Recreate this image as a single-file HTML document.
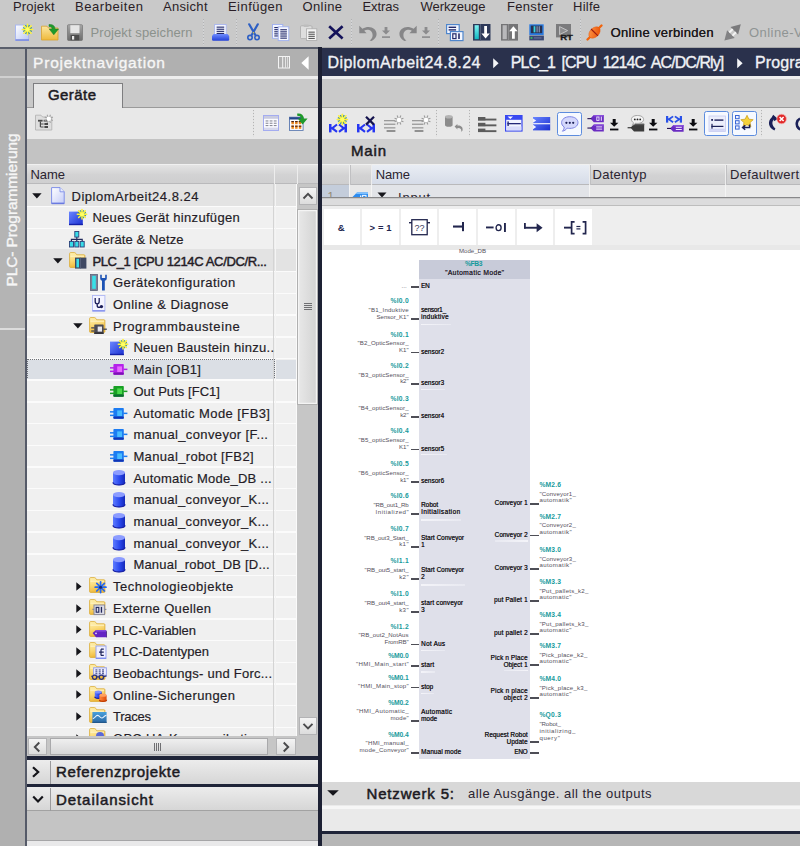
<!DOCTYPE html>
<html>
<head>
<meta charset="utf-8">
<title>TIA Portal</title>
<style>
*{box-sizing:border-box;margin:0;padding:0}
html,body{width:800px;height:846px;overflow:hidden;background:#c9c9c9;font-family:"Liberation Sans",sans-serif;font-size:13px;color:#241c26}
#root{position:relative;width:800px;height:846px;overflow:hidden;background:#c9c9c9}
#root div,#root span,#root svg{position:absolute}
.t{white-space:nowrap;display:block}
svg{overflow:visible}
</style>
</head>
<body>
<div id="root">
<span class="t" style="top:0.40px;font-size:13px;line-height:13px;color:#2a1d26;left:13.00px;letter-spacing:0.172px;">Projekt</span>
<span class="t" style="top:0.40px;font-size:13px;line-height:13px;color:#2a1d26;left:75.00px;letter-spacing:0.568px;">Bearbeiten</span>
<span class="t" style="top:0.40px;font-size:13px;line-height:13px;color:#2a1d26;left:163.00px;letter-spacing:0.310px;">Ansicht</span>
<span class="t" style="top:0.40px;font-size:13px;line-height:13px;color:#2a1d26;left:228.00px;letter-spacing:0.453px;">Einf&uuml;gen</span>
<span class="t" style="top:0.40px;font-size:13px;line-height:13px;color:#2a1d26;left:302.50px;letter-spacing:0.384px;">Online</span>
<span class="t" style="top:0.40px;font-size:13px;line-height:13px;color:#2a1d26;left:362.50px;letter-spacing:-0.069px;">Extras</span>
<span class="t" style="top:0.40px;font-size:13px;line-height:13px;color:#2a1d26;left:420.50px;letter-spacing:-0.064px;">Werkzeuge</span>
<span class="t" style="top:0.40px;font-size:13px;line-height:13px;color:#2a1d26;left:507.00px;letter-spacing:0.320px;">Fenster</span>
<span class="t" style="top:0.40px;font-size:13px;line-height:13px;color:#2a1d26;left:573.00px;letter-spacing:0.246px;">Hilfe</span>
<svg width="0" height="0" style="left:0;top:0"><defs>
<linearGradient id="gPage" x1="0" y1="0" x2="1" y2="1"><stop offset="0" stop-color="#ffffff"/><stop offset="1" stop-color="#b9c6f5"/></linearGradient>
<linearGradient id="gFold" x1="0" y1="0" x2="0" y2="1"><stop offset="0" stop-color="#fbe6a0"/><stop offset="1" stop-color="#efb93a"/></linearGradient>
<linearGradient id="gBlue" x1="0" y1="0" x2="0" y2="1"><stop offset="0" stop-color="#6f8cff"/><stop offset="1" stop-color="#2340d8"/></linearGradient>
<linearGradient id="gBlueSq" x1="0" y1="0" x2="1" y2="1"><stop offset="0" stop-color="#6a86ff"/><stop offset="1" stop-color="#1a2fd0"/></linearGradient>
<linearGradient id="gCyl" x1="0" y1="0" x2="1" y2="0"><stop offset="0" stop-color="#5d7bff"/><stop offset="0.55" stop-color="#2a48ee"/><stop offset="1" stop-color="#1428b8"/></linearGradient>
<linearGradient id="gTeal" x1="0" y1="0" x2="0" y2="1"><stop offset="0" stop-color="#7ff4f4"/><stop offset="1" stop-color="#10b8c0"/></linearGradient>
<linearGradient id="gGray" x1="0" y1="0" x2="0" y2="1"><stop offset="0" stop-color="#a6a6a6"/><stop offset="1" stop-color="#6c6c6c"/></linearGradient>
<linearGradient id="gOr" x1="0" y1="0" x2="1" y2="1"><stop offset="0" stop-color="#ff9a4a"/><stop offset="1" stop-color="#e84a00"/></linearGradient>
</defs></svg>
<svg style="left:15px;top:23.5px" width="19" height="18" viewBox="0 0 19 18" ><rect x="0.5" y="1" width="13" height="15.5" fill="url(#gPage)" stroke="#aab8f0" stroke-width="1"/><rect x="0.5" y="15.2" width="13.5" height="1.6" fill="#7a8ae0"/><line x1="13.61" y1="5.96" x2="16.92" y2="7.33" stroke="#2e8a8a" stroke-width="1.5" opacity="0.85"/><line x1="12.96" y1="6.61" x2="14.33" y2="9.92" stroke="#2e8a8a" stroke-width="1.5" opacity="0.85"/><line x1="12.04" y1="6.61" x2="10.67" y2="9.92" stroke="#2e8a8a" stroke-width="1.5" opacity="0.85"/><line x1="11.39" y1="5.96" x2="8.08" y2="7.33" stroke="#2e8a8a" stroke-width="1.5" opacity="0.85"/><line x1="11.39" y1="5.04" x2="8.08" y2="3.67" stroke="#2e8a8a" stroke-width="1.5" opacity="0.85"/><line x1="12.04" y1="4.39" x2="10.67" y2="1.08" stroke="#2e8a8a" stroke-width="1.5" opacity="0.85"/><line x1="12.96" y1="4.39" x2="14.33" y2="1.08" stroke="#2e8a8a" stroke-width="1.5" opacity="0.85"/><line x1="13.61" y1="5.04" x2="16.92" y2="3.67" stroke="#2e8a8a" stroke-width="1.5" opacity="0.85"/><line x1="12.50" y1="5.50" x2="17.70" y2="5.50" stroke="#fff23a" stroke-width="1.5" stroke-linecap="round"/><line x1="12.50" y1="5.50" x2="16.18" y2="9.18" stroke="#fff23a" stroke-width="1.5" stroke-linecap="round"/><line x1="12.50" y1="5.50" x2="12.50" y2="10.70" stroke="#fff23a" stroke-width="1.5" stroke-linecap="round"/><line x1="12.50" y1="5.50" x2="8.82" y2="9.18" stroke="#fff23a" stroke-width="1.5" stroke-linecap="round"/><line x1="12.50" y1="5.50" x2="7.30" y2="5.50" stroke="#fff23a" stroke-width="1.5" stroke-linecap="round"/><line x1="12.50" y1="5.50" x2="8.82" y2="1.82" stroke="#fff23a" stroke-width="1.5" stroke-linecap="round"/><line x1="12.50" y1="5.50" x2="12.50" y2="0.30" stroke="#fff23a" stroke-width="1.5" stroke-linecap="round"/><line x1="12.50" y1="5.50" x2="16.18" y2="1.82" stroke="#fff23a" stroke-width="1.5" stroke-linecap="round"/><circle cx="12.50" cy="5.50" r="2.18" fill="#ffff66"/></svg>
<svg style="left:41px;top:23.5px" width="19" height="18" viewBox="0 0 19 18" ><path d="M0.5 2.2 H6 L7.5 4 H17 V16 H0.5Z" fill="url(#gFold)" stroke="#d9a22e" stroke-width="0.8"/><path d="M8 0.5 C12 0.3 14 2 14 5 H17.5 L12.8 10.8 L8.2 5 H11 C11 3.2 10 2.6 8 2.5Z" fill="#1f9a2a" stroke="#157a1e" stroke-width="0.5"/></svg>
<svg style="left:67px;top:23.5px" width="16" height="17.5" viewBox="0 0 16 17.5" ><rect x="0.5" y="0.7" width="15" height="15.8" rx="1" fill="url(#gGray)" stroke="#6a6a6a" stroke-width="0.6"/><rect x="3.3" y="1.2" width="9.2" height="8" fill="#e6e6e6"/><rect x="3.6" y="11" width="8.6" height="5.3" fill="#4c4c4c"/><rect x="5" y="12" width="2.2" height="3.6" fill="#e8e8e8"/></svg>
<div style="left:202.5px;top:19px;width:1px;height:26px;background:repeating-linear-gradient(#b0b1b3 0 1px,#d4d5d7 1px 3px)"></div>
<svg style="left:211.8px;top:23.7px" width="18" height="17" viewBox="0 0 18 17" ><rect x="2.6" y="0.5" width="11.6" height="10.5" fill="#f4f6ff" stroke="#a9b6ee" stroke-width="0.9"/><rect x="4.6" y="2.6" width="7.6" height="1.1" fill="#232a6a"/><rect x="4.6" y="4.7" width="7.6" height="1.1" fill="#232a6a"/><rect x="4.6" y="6.8" width="7.6" height="1.1" fill="#232a6a"/><rect x="4.6" y="8.9" width="7.6" height="1.1" fill="#232a6a"/><path d="M1.5 10 H15.7 L17.2 12 V15.4 Q17.2 16.7 15.9 16.7 H1.3 Q0 16.7 0 15.4 V12Z" fill="url(#gBlue)"/></svg>
<div style="left:236px;top:19px;width:1px;height:26px;background:repeating-linear-gradient(#b0b1b3 0 1px,#d4d5d7 1px 3px)"></div>
<svg style="left:247px;top:23.7px" width="13" height="17" viewBox="0 0 13 17" ><path d="M2.2 0.3 L8.2 10.8 M10.8 0.3 L4.8 10.8" stroke="#2d5fc4" stroke-width="2.2" stroke-linecap="round" fill="none"/><circle cx="3" cy="13.6" r="2.2" fill="none" stroke="#2d5fc4" stroke-width="1.6"/><circle cx="10" cy="13.6" r="2.2" fill="none" stroke="#2d5fc4" stroke-width="1.6"/><circle cx="6.5" cy="8.8" r="0.8" fill="#e8d040"/></svg>
<svg style="left:272.2px;top:23.7px" width="17.5" height="17" viewBox="0 0 17.5 17" ><rect x="0.5" y="0.5" width="10.3" height="13.8" fill="#f4f6ff" stroke="#9fb0f0" stroke-width="0.9"/><rect x="2.3" y="3" width="6.5" height="1.1" fill="#232a6a"/><rect x="2.3" y="5.1" width="6.5" height="1.1" fill="#232a6a"/><rect x="2.3" y="7.2" width="6.5" height="1.1" fill="#232a6a"/><rect x="2.3" y="9.3" width="6.5" height="1.1" fill="#232a6a"/><rect x="2.3" y="11.4" width="6.5" height="1.1" fill="#232a6a"/><rect x="6.2" y="2.8" width="10.6" height="13.8" fill="#f7f8ff" stroke="#9fb0f0" stroke-width="0.9"/><rect x="8.3" y="5.2" width="6.6" height="1.1" fill="#232a6a"/><rect x="8.3" y="7.3" width="6.6" height="1.1" fill="#232a6a"/><rect x="8.3" y="9.4" width="6.6" height="1.1" fill="#232a6a"/><rect x="8.3" y="11.5" width="6.6" height="1.1" fill="#232a6a"/><rect x="8.3" y="13.6" width="6.6" height="1.1" fill="#232a6a"/></svg>
<svg style="left:300px;top:23.7px" width="17.5" height="17" viewBox="0 0 17.5 17" ><rect x="0.5" y="1.8" width="11.5" height="12.8" rx="1" fill="#dedede" stroke="#a9a9a9" stroke-width="0.8"/><rect x="3.6" y="0.4" width="5.2" height="2.6" rx="0.8" fill="#bdbdbd"/><rect x="6.4" y="4.8" width="10.4" height="11.6" fill="#f3f3f3" stroke="#ababab" stroke-width="0.8"/><rect x="8.4" y="7.6" width="6.4" height="1.1" fill="#5b5b5b"/><rect x="8.4" y="9.7" width="6.4" height="1.1" fill="#5b5b5b"/><rect x="8.4" y="11.8" width="6.4" height="1.1" fill="#5b5b5b"/><rect x="8.4" y="13.9" width="6.4" height="1.1" fill="#5b5b5b"/></svg>
<svg style="left:328px;top:25.2px" width="16" height="15" viewBox="0 0 16 15" ><path d="M1.2 1.2 L14.6 13.4 M14.6 1.2 L1.2 13.4" stroke="#14125a" stroke-width="2.7" fill="none"/></svg>
<div style="left:351px;top:19px;width:1px;height:26px;background:repeating-linear-gradient(#b0b1b3 0 1px,#d4d5d7 1px 3px)"></div>
<svg style="left:359px;top:24.5px" width="18" height="16.5" viewBox="0 0 18 16.5" ><path d="M0.3 0.8 L0.3 8.2 L7.6 8.2 L5.2 5.7 C8.6 3.6 13.6 5.2 13.6 10.2 C13.6 12.6 12.4 14.2 10.6 15.6 L12.6 16 C16 14 17.6 11.8 17.6 9 C17.6 3.4 10.4 -0.2 3.4 3.8Z" fill="#868688"/></svg>
<svg style="left:382px;top:27.2px" width="8" height="11.5" viewBox="0 0 8 11.5" ><path d="M2.6 0 H5.4 V3.6 H8 L4 7.6 L0 3.6 H2.6Z" fill="#8b8b8d"/><rect x="0" y="9.3" width="8" height="1.6" fill="#8b8b8d"/></svg>
<svg style="left:399px;top:24.5px" width="18" height="16.5" viewBox="0 0 18 16.5" ><path d="M17.7 0.8 L17.7 8.2 L10.4 8.2 L12.8 5.7 C9.4 3.6 4.4 5.2 4.4 10.2 C4.4 12.6 5.6 14.2 7.4 15.6 L5.4 16 C2 14 0.4 11.8 0.4 9 C0.4 3.4 7.6 -0.2 14.6 3.8Z" fill="#868688"/></svg>
<svg style="left:422px;top:27.2px" width="8" height="11.5" viewBox="0 0 8 11.5" ><path d="M2.6 0 H5.4 V3.6 H8 L4 7.6 L0 3.6 H2.6Z" fill="#8b8b8d"/><rect x="0" y="9.3" width="8" height="1.6" fill="#8b8b8d"/></svg>
<div style="left:437.5px;top:19px;width:1px;height:26px;background:repeating-linear-gradient(#b0b1b3 0 1px,#d4d5d7 1px 3px)"></div>
<svg style="left:446px;top:23.7px" width="18" height="17.2" viewBox="0 0 18 17.2" ><rect x="0.6" y="0.6" width="12.6" height="9" fill="#f4f7ff" stroke="#4f86cc" stroke-width="1.2"/><rect x="2.6" y="2.6" width="7.5" height="1.4" fill="#232a6a"/><rect x="2.6" y="5.2" width="7.5" height="1.4" fill="#232a6a"/><rect x="4.4" y="7.6" width="12.6" height="9" fill="#f4f7ff" stroke="#4f86cc" stroke-width="1.2"/><rect x="6.8" y="9.8" width="3.2" height="4.8" fill="none" stroke="#232a6a" stroke-width="1.2"/><rect x="12.2" y="9.4" width="1.6" height="5.6" fill="#232a6a"/></svg>
<svg style="left:473px;top:23.8px" width="17.5" height="16.6" viewBox="0 0 17.5 16.6" ><rect x="0" y="0" width="17.5" height="16.6" fill="#2e3a5a"/><rect x="1.6" y="1.2" width="4.2" height="14" fill="url(#gTeal)"/><rect x="7" y="0" width="0.9" height="16.6" fill="#55607c"/><path d="M11.2 2 H14 V9.6 H16.8 L12.6 14.6 L8.4 9.6 H11.2Z" fill="#ffffff"/></svg>
<svg style="left:501.2px;top:23.8px" width="17" height="16.6" viewBox="0 0 17 16.6" ><rect x="0" y="0" width="17" height="16.6" fill="#747476"/><rect x="1.6" y="1.2" width="4.2" height="14" fill="#b9b9bb"/><rect x="7" y="0" width="0.9" height="16.6" fill="#8f8f91"/><path d="M11 14.8 H13.8 V7.2 H16.6 L12.4 2.2 L8.2 7.2 H11Z" fill="#ffffff"/></svg>
<svg style="left:529.4px;top:23.9px" width="15.2" height="16.6" viewBox="0 0 15.2 16.6" ><rect x="0.3" y="0.3" width="14.4" height="10.8" fill="#2b7be0"/><rect x="1.8" y="1.6" width="11.4" height="7.6" fill="#27304e"/><rect x="4.6" y="2.2" width="1.8" height="6.2" fill="#35d6e6"/><rect x="7.4" y="2.2" width="1.4" height="6.2" fill="#7a88a8"/><rect x="9.6" y="2.2" width="1.4" height="6.2" fill="#7a88a8"/><rect x="0.3" y="11.6" width="14.6" height="4.8" fill="#3c4874"/><rect x="1.6" y="13.2" width="1.8" height="1.5" fill="#33d060"/><rect x="5" y="13.4" width="7.5" height="1.1" fill="#6874a0"/></svg>
<svg style="left:555.6px;top:24px" width="18" height="17" viewBox="0 0 18 17" ><rect x="0" y="0" width="15" height="13.4" fill="#7b7b7d"/><path d="M3.6 2.6 L11.6 6.6 L3.6 10.6Z" fill="#8e8e90" stroke="#c4c4c6" stroke-width="1"/><text x="4.2" y="16.4" font-family="Liberation Sans, sans-serif" font-weight="bold" font-size="7.6" fill="#1a1a1c" stroke="#1a1a1c" stroke-width="0.3" textLength="12.6" lengthAdjust="spacingAndGlyphs">RT</text></svg>
<div style="left:580px;top:19px;width:1px;height:26px;background:repeating-linear-gradient(#b0b1b3 0 1px,#d4d5d7 1px 3px)"></div>
<svg style="left:585.5px;top:23.7px" width="17" height="17" viewBox="0 0 17 17" ><g transform="rotate(-45 8.5 8.5)"><rect x="-2.6" y="7.3" width="22.2" height="2.4" rx="1.2" fill="#f0650e"/><ellipse cx="8.5" cy="8.5" rx="6.6" ry="4.5" fill="url(#gOr)" stroke="#e85606" stroke-width="0.5"/><rect x="8" y="3.6" width="1.1" height="9.8" fill="#9c1c10"/></g></svg>
<svg style="left:723.8px;top:23.7px" width="17.5" height="17" viewBox="0 0 17.5 17" ><g transform="translate(8.6 8.4) rotate(-45)"><path d="M-11.6 0 L-2.4 -5.4 V5.4Z" fill="#828284"/><path d="M11.6 0 L2.4 -5.4 V5.4Z" fill="#7a7a7c"/><rect x="-2.4" y="-3.2" width="4.8" height="1.9" fill="#f4f4f4"/><rect x="-2.4" y="1.3" width="4.8" height="1.9" fill="#f4f4f4"/></g></svg>
<svg width="0" height="0" style="left:0;top:0"><defs>
<linearGradient id="gFold2" x1="0" y1="0" x2="0.3" y2="1"><stop offset="0" stop-color="#fff3b8"/><stop offset="0.5" stop-color="#fbdc7c"/><stop offset="1" stop-color="#efb838"/></linearGradient>
<linearGradient id="gOrCyl" x1="0" y1="0" x2="1" y2="0"><stop offset="0" stop-color="#ff8a40"/><stop offset="1" stop-color="#e04a08"/></linearGradient>
<linearGradient id="gTrace" x1="0" y1="0" x2="0" y2="1"><stop offset="0" stop-color="#48a0dc"/><stop offset="1" stop-color="#2a68a4"/></linearGradient>
<linearGradient id="gDocL" x1="0" y1="0" x2="1" y2="1"><stop offset="0" stop-color="#ffffff"/><stop offset="1" stop-color="#c4ccf8"/></linearGradient>
</defs></svg>
<span class="t" style="top:26.00px;font-size:13px;line-height:13px;color:#8b918c;left:90.50px;letter-spacing:0.097px;">Projekt speichern</span>
<span class="t" style="top:26.00px;font-size:13px;line-height:13px;color:#1d1a1c;left:610.50px;letter-spacing:0.314px;text-shadow:0.15px 0 0 #1d1a1c;">Online verbinden</span>
<span class="t" style="top:26.00px;font-size:13px;line-height:13px;color:#8f9494;left:749.00px;letter-spacing:0.442px;">Online-Verbindung trennen</span>
<div style="left:0px;top:47.3px;width:318px;height:1.6px;background:#5a5f6c;"></div>
<div style="left:318px;top:47.6px;width:482px;height:2px;background:#2a314c;"></div>
<div style="left:318px;top:46.6px;width:482px;height:1px;background:#a8a8a8;"></div>
<div style="left:0px;top:48.7px;width:26px;height:798px;background:#b0b0b0;"></div>
<div style="left:0px;top:78px;width:25px;height:250.5px;background:#b4b4b4;"></div>
<div style="left:0px;top:76.2px;width:25px;height:1.8px;background:#d0d0d0;"></div>
<div style="left:0px;top:328.2px;width:25px;height:1.7px;background:#dcdcdc;"></div>
<div style="left:25px;top:47px;width:1.8px;height:799px;background:#555a68;"></div>
<div style="left:0;top:78px;width:25px;height:250px;"><span style="left:12.2px;top:131.7px;white-space:nowrap;transform:translate(-50%,-50%) rotate(-90deg);font-size:15.5px;color:#f6f6f6;letter-spacing:-0.1px;line-height:16px;display:block;-webkit-text-stroke:0.35px #f6f6f6">PLC- Programmierung</span></div>
<div style="left:27px;top:48.7px;width:291px;height:27.6px;background:#b0b0b0;"></div>
<span class="t" style="top:55.18px;font-size:15.5px;line-height:15.5px;color:#f6f6f6;left:33.00px;-webkit-text-stroke:0.35px #f6f6f6;letter-spacing:0.817px;">Projektnavigation</span>
<svg style="left:277.5px;top:56px" width="12" height="12.5" viewBox="0 0 12 12.5" ><rect x="0.5" y="0.5" width="11" height="11.5" fill="none" stroke="#f4f4f4" stroke-width="1"/><rect x="4.2" y="0.5" width="1" height="11.5" fill="#f4f4f4"/><rect x="7" y="1" width="1" height="11" fill="#e4e4e4"/><rect x="9" y="1" width="1" height="11" fill="#dcdcdc"/></svg>
<svg style="left:301px;top:55.8px" width="8" height="14" viewBox="0 0 8 14" ><path d="M7.6 0.2 L0.3 7 L7.6 13.8Z" fill="#ffffff"/></svg>
<div style="left:27px;top:76.3px;width:291px;height:2.8px;background:#eeeeee;"></div>
<div style="left:27px;top:79.1px;width:291px;height:28px;background:#c9c9c9;"></div>
<div style="left:27px;top:106.5px;width:291px;height:1px;background:#9a9a9a;"></div>
<div style="left:33px;top:83px;width:90px;height:25px;background:#e8e8e8;border:1px solid #7e7e80;border-bottom:none"></div>
<span class="t" style="top:86.80px;font-size:15px;line-height:15px;color:#1c1a22;left:48.00px;-webkit-text-stroke:0.5px #1c1a22;letter-spacing:0.428px;">Ger&auml;te</span>
<div style="left:27px;top:107.5px;width:291px;height:31.5px;background:#e8e8e8;"></div>
<div style="left:34px;top:106px;width:88px;height:2px;background:#e8e8e8;"></div>
<svg style="left:34.5px;top:114px" width="18.5" height="17.5" viewBox="0 0 18.5 17.5" ><path d="M0.5 1.2 H6 L7.6 3 H16.8 V16 H0.5Z" fill="#dedede" stroke="#b4b4b4" stroke-width="0.9"/><path d="M5.4 7.4 V13 M5.4 10 H8.6 M5.4 13 H8.6" stroke="#4a4a4a" stroke-width="1.2" fill="none"/><rect x="3" y="5.8" width="4.6" height="1.8" fill="#484848"/><rect x="8.6" y="5.8" width="4" height="1.8" fill="#5c5c5c"/><rect x="9.4" y="9" width="3.6" height="2" fill="#484848"/><rect x="9.4" y="12" width="3.6" height="2" fill="#484848"/><line x1="15.46" y1="5.49" x2="17.87" y2="6.48" stroke="#a4a4a4" stroke-width="1.1"/><line x1="14.49" y1="6.46" x2="15.48" y2="8.87" stroke="#a4a4a4" stroke-width="1.1"/><line x1="13.11" y1="6.46" x2="12.12" y2="8.87" stroke="#a4a4a4" stroke-width="1.1"/><line x1="12.14" y1="5.49" x2="9.73" y2="6.48" stroke="#a4a4a4" stroke-width="1.1"/><line x1="12.14" y1="4.11" x2="9.73" y2="3.12" stroke="#a4a4a4" stroke-width="1.1"/><line x1="13.11" y1="3.14" x2="12.12" y2="0.73" stroke="#a4a4a4" stroke-width="1.1"/><line x1="14.49" y1="3.14" x2="15.48" y2="0.73" stroke="#a4a4a4" stroke-width="1.1"/><line x1="15.46" y1="4.11" x2="17.87" y2="3.12" stroke="#a4a4a4" stroke-width="1.1"/><circle cx="13.80" cy="4.80" r="2.2" fill="#ffffff"/></svg>
<div style="left:253px;top:110px;width:1px;height:27px;background:repeating-linear-gradient(#b4b4b4 0 1px,#e2e2e2 1px 3px)"></div>
<svg style="left:263px;top:115px" width="16.5" height="16.5" viewBox="0 0 16.5 16.5" ><rect x="0.5" y="0.5" width="15" height="15" fill="#fbfbff" stroke="#a4acf0" stroke-width="1"/><rect x="1" y="1" width="14" height="2.8" fill="#c9cbe0"/><rect x="1" y="12.6" width="14" height="2.4" fill="#d6d8ec"/><rect x="2.6" y="5.4" width="2.8" height="1.1" fill="#8a8c98"/><rect x="2.6" y="7.7" width="2.8" height="1.1" fill="#8a8c98"/><rect x="2.6" y="10" width="2.8" height="1.1" fill="#8a8c98"/><rect x="6.7" y="5.4" width="2.8" height="1.1" fill="#8a8c98"/><rect x="6.7" y="7.7" width="2.8" height="1.1" fill="#8a8c98"/><rect x="6.7" y="10" width="2.8" height="1.1" fill="#8a8c98"/><rect x="10.8" y="5.4" width="2.8" height="1.1" fill="#8a8c98"/><rect x="10.8" y="7.7" width="2.8" height="1.1" fill="#8a8c98"/><rect x="10.8" y="10" width="2.8" height="1.1" fill="#8a8c98"/></svg>
<svg style="left:289px;top:113.2px" width="19" height="18" viewBox="0 0 19 18" ><rect x="0.5" y="4.2" width="13.6" height="13.2" fill="#fdfdff" stroke="#5a78b0" stroke-width="0.9"/><rect x="0.5" y="4.2" width="13.6" height="2.3" fill="#24468c"/><rect x="2.4" y="8" width="2.5" height="3.2" fill="#f08a1c"/><rect x="2.4" y="8" width="2.5" height="1.2" fill="#4a2418"/><rect x="2.4" y="12.6" width="2.5" height="3.2" fill="#f08a1c"/><rect x="2.4" y="12.6" width="2.5" height="1.2" fill="#4a2418"/><rect x="6.1" y="8" width="2.5" height="3.2" fill="#f08a1c"/><rect x="6.1" y="8" width="2.5" height="1.2" fill="#4a2418"/><rect x="6.1" y="12.6" width="2.5" height="3.2" fill="#f08a1c"/><rect x="6.1" y="12.6" width="2.5" height="1.2" fill="#4a2418"/><rect x="9.8" y="8" width="2.5" height="3.2" fill="#f08a1c"/><rect x="9.8" y="8" width="2.5" height="1.2" fill="#4a2418"/><rect x="9.8" y="12.6" width="2.5" height="3.2" fill="#f08a1c"/><rect x="9.8" y="12.6" width="2.5" height="1.2" fill="#4a2418"/><path d="M8.2 0.6 C12.4 0.2 14.6 2 14.8 5.6 H18.6 L13.6 11.6 L8.8 5.6 H12 C11.8 3.4 10.6 2.8 8.2 2.8Z" fill="#1f9a2a"/></svg>
<div style="left:27px;top:139px;width:291px;height:25px;background:#c3c3c3;"></div>
<div style="left:27px;top:164px;width:291px;height:20px;background:linear-gradient(#e4e4e4,#d2d2d3 55%,#cfcfd0);border-top:1px solid #f0f0f0;border-bottom:1px solid #b9b9bb"></div>
<div style="left:273.5px;top:164px;width:1px;height:20px;background:#ededed;"></div>
<div style="left:296.5px;top:164px;width:1px;height:20px;background:#ededed;"></div>
<span class="t" style="top:168.00px;font-size:13px;line-height:13px;color:#2b2430;left:30.50px;letter-spacing:-0.062px;">Name</span>
<div style="left:27px;top:184.4px;width:270px;height:551.8px;background:#f0f0f0;overflow:hidden">
<div style="left:0;top:0.0px;width:270px;height:21.7px;background:#e3e3e3"></div>
<div style="left:0;top:21.5px;width:270px;height:1.5px;background:#fbfbfb"></div>
<div style="left:0;top:43.2px;width:270px;height:1.5px;background:#fbfbfb"></div>
<div style="left:0;top:64.9px;width:270px;height:1.5px;background:#fbfbfb"></div>
<div style="left:0;top:65.1px;width:270px;height:21.7px;background:#e3e3e3"></div>
<div style="left:0;top:86.6px;width:270px;height:1.5px;background:#fbfbfb"></div>
<div style="left:0;top:108.3px;width:270px;height:1.5px;background:#fbfbfb"></div>
<div style="left:0;top:130.0px;width:270px;height:1.5px;background:#fbfbfb"></div>
<div style="left:0;top:151.7px;width:270px;height:1.5px;background:#fbfbfb"></div>
<div style="left:0;top:173.4px;width:270px;height:1.5px;background:#fbfbfb"></div>
<div style="left:0;top:175.2px;width:270px;height:20.1px;background:#dbdfe5"></div>
<div style="left:0;top:175.0px;width:248px;height:20.8px;border:1px dotted #6d7076"></div>
<div style="left:0;top:195.1px;width:270px;height:1.5px;background:#fbfbfb"></div>
<div style="left:0;top:216.8px;width:270px;height:1.5px;background:#fbfbfb"></div>
<div style="left:0;top:238.5px;width:270px;height:1.5px;background:#fbfbfb"></div>
<div style="left:0;top:260.2px;width:270px;height:1.5px;background:#fbfbfb"></div>
<div style="left:0;top:281.9px;width:270px;height:1.5px;background:#fbfbfb"></div>
<div style="left:0;top:303.6px;width:270px;height:1.5px;background:#fbfbfb"></div>
<div style="left:0;top:325.3px;width:270px;height:1.5px;background:#fbfbfb"></div>
<div style="left:0;top:347.0px;width:270px;height:1.5px;background:#fbfbfb"></div>
<div style="left:0;top:368.7px;width:270px;height:1.5px;background:#fbfbfb"></div>
<div style="left:0;top:390.4px;width:270px;height:1.5px;background:#fbfbfb"></div>
<div style="left:0;top:412.1px;width:270px;height:1.5px;background:#fbfbfb"></div>
<div style="left:0;top:433.8px;width:270px;height:1.5px;background:#fbfbfb"></div>
<div style="left:0;top:455.5px;width:270px;height:1.5px;background:#fbfbfb"></div>
<div style="left:0;top:477.2px;width:270px;height:1.5px;background:#fbfbfb"></div>
<div style="left:0;top:498.9px;width:270px;height:1.5px;background:#fbfbfb"></div>
<div style="left:0;top:520.6px;width:270px;height:1.5px;background:#fbfbfb"></div>
<div style="left:0;top:542.3px;width:270px;height:1.5px;background:#fbfbfb"></div>
<div style="left:0;top:564.0px;width:270px;height:1.5px;background:#fbfbfb"></div>
<div style="left:246.2px;top:0px;width:1.3px;height:552px;background:#d4d4d4;"></div>
<div style="left:247.5px;top:0px;width:1px;height:552px;background:#f4f4f4;"></div>
<div style="left:268.6px;top:0px;width:1.4px;height:552px;background:#fafafa;"></div>
<svg style="left:5.2px;top:8.4px" width="10" height="6" viewBox="0 0 10 6"><path d="M0.2 0.3 L9.6 0.3 L4.9 5.4Z" fill="#15151a"/></svg>
<svg style="left:23.6px;top:2.4px" width="14" height="17.5" viewBox="0 0 14 17.5" ><path d="M0.6 0.6 H9 L13.2 4.8 V16.6 H0.6Z" fill="url(#gDocL)" stroke="#8090e8" stroke-width="1"/><path d="M9 0.6 V4.8 H13.2" fill="#e8ecff" stroke="#8090e8" stroke-width="0.9"/><rect x="0.6" y="15.6" width="12.6" height="1.5" fill="#6a7ae0"/></svg>
<svg style="left:42px;top:24.9px" width="19" height="17" viewBox="0 0 19 17" ><rect x="0" y="2.6" width="13.8" height="13.4" fill="url(#gBlueSq)"/><rect x="0" y="14.8" width="13.8" height="1.4" fill="#1420a8"/><line x1="14.11" y1="5.66" x2="16.99" y2="6.85" stroke="#2e8a8a" stroke-width="1.5" opacity="0.85"/><line x1="13.46" y1="6.31" x2="14.65" y2="9.19" stroke="#2e8a8a" stroke-width="1.5" opacity="0.85"/><line x1="12.54" y1="6.31" x2="11.35" y2="9.19" stroke="#2e8a8a" stroke-width="1.5" opacity="0.85"/><line x1="11.89" y1="5.66" x2="9.01" y2="6.85" stroke="#2e8a8a" stroke-width="1.5" opacity="0.85"/><line x1="11.89" y1="4.74" x2="9.01" y2="3.55" stroke="#2e8a8a" stroke-width="1.5" opacity="0.85"/><line x1="12.54" y1="4.09" x2="11.35" y2="1.21" stroke="#2e8a8a" stroke-width="1.5" opacity="0.85"/><line x1="13.46" y1="4.09" x2="14.65" y2="1.21" stroke="#2e8a8a" stroke-width="1.5" opacity="0.85"/><line x1="14.11" y1="4.74" x2="16.99" y2="3.55" stroke="#2e8a8a" stroke-width="1.5" opacity="0.85"/><line x1="13.00" y1="5.20" x2="17.70" y2="5.20" stroke="#fff23a" stroke-width="1.5" stroke-linecap="round"/><line x1="13.00" y1="5.20" x2="16.32" y2="8.52" stroke="#fff23a" stroke-width="1.5" stroke-linecap="round"/><line x1="13.00" y1="5.20" x2="13.00" y2="9.90" stroke="#fff23a" stroke-width="1.5" stroke-linecap="round"/><line x1="13.00" y1="5.20" x2="9.68" y2="8.52" stroke="#fff23a" stroke-width="1.5" stroke-linecap="round"/><line x1="13.00" y1="5.20" x2="8.30" y2="5.20" stroke="#fff23a" stroke-width="1.5" stroke-linecap="round"/><line x1="13.00" y1="5.20" x2="9.68" y2="1.88" stroke="#fff23a" stroke-width="1.5" stroke-linecap="round"/><line x1="13.00" y1="5.20" x2="13.00" y2="0.50" stroke="#fff23a" stroke-width="1.5" stroke-linecap="round"/><line x1="13.00" y1="5.20" x2="16.32" y2="1.88" stroke="#fff23a" stroke-width="1.5" stroke-linecap="round"/><circle cx="13.00" cy="5.20" r="1.97" fill="#ffff66"/></svg>
<svg style="left:42.3px;top:46.6px" width="16" height="17" viewBox="0 0 16 17" ><path d="M7.8 5.6 V8.4 M2.4 10.6 V8.4 H13.2 V10.6 M7.8 8.4 V10.6" stroke="#222a5c" stroke-width="1.2" fill="none"/><rect x="5.8" y="0.5" width="4" height="5.6" fill="#38dce8" stroke="#2a3f78" stroke-width="0.9"/><rect x="0.5" y="10.4" width="4" height="5.6" fill="#38dce8" stroke="#2a3f78" stroke-width="0.9"/><rect x="5.8" y="10.4" width="4" height="5.6" fill="#38dce8" stroke="#2a3f78" stroke-width="0.9"/><rect x="11.2" y="10.4" width="4" height="5.6" fill="#38dce8" stroke="#2a3f78" stroke-width="0.9"/></svg>
<svg style="left:25.6px;top:73.5px" width="10" height="6" viewBox="0 0 10 6"><path d="M0.2 0.3 L9.6 0.3 L4.9 5.4Z" fill="#15151a"/></svg>
<svg style="left:41.8px;top:66.8px" width="18" height="18" viewBox="0 0 18 18" ><path d="M0.6 15.6 V2.6 Q0.6 1.6 1.6 1.6 H5.4 Q6.2 1.6 6.8 2.4 L7.8 3.8 H15 Q15.9 3.8 15.9 4.7 V15.6 Q15.9 16.4 15 16.4 H1.5 Q0.6 16.4 0.6 15.6Z" fill="url(#gFold2)" stroke="#d9a830" stroke-width="0.8"/><path d="M1.4 5.2 H15.1" stroke="#fff6cf" stroke-width="0.9"/><rect x="6" y="6.6" width="11.4" height="11" fill="#3e4862"/><rect x="7.4" y="7.8" width="2.6" height="8.6" fill="#38dce8"/><rect x="11" y="6.6" width="0.8" height="11" fill="#5a6480"/></svg>
<svg style="left:62.6px;top:89.4px" width="17.5" height="17" viewBox="0 0 17.5 17" ><rect x="0.5" y="0.5" width="7" height="16" fill="#7a8098" stroke="#5c6278" stroke-width="0.8"/><rect x="2.2" y="1.8" width="3.6" height="13" fill="#38e0e8"/><path d="M10.2 0.8 V4.4 Q10.2 6.2 12 6.8 V16.6 H14.8 V6.8 Q16.8 6.2 16.8 4.4 V0.8 H15.2 V4 H11.8 V0.8Z" fill="#1c52b4"/></svg>
<svg style="left:64.6px;top:110.9px" width="13.5" height="17" viewBox="0 0 13.5 17" ><rect x="0.5" y="0.5" width="12.4" height="15.4" fill="#f4f4ff" stroke="#b0b8f4" stroke-width="0.9"/><rect x="0.5" y="15" width="12.4" height="1.6" fill="#8c98f0"/><path d="M3.2 3 V6.4 Q3.2 8.8 5.2 8.8 Q7.2 8.8 7.2 6.4 V3 M5.2 8.8 V10.4 Q5.2 12.4 7.2 12.4 H8.4" fill="none" stroke="#1a1c58" stroke-width="1.3"/><circle cx="9.4" cy="11.6" r="1.7" fill="#1a1c58"/></svg>
<svg style="left:46.4px;top:138.6px" width="10" height="6" viewBox="0 0 10 6"><path d="M0.2 0.3 L9.6 0.3 L4.9 5.4Z" fill="#15151a"/></svg>
<svg style="left:62.4px;top:131.7px" width="19" height="18" viewBox="0 0 19 18" ><path d="M0.6 15.6 V2.6 Q0.6 1.6 1.6 1.6 H5.4 Q6.2 1.6 6.8 2.4 L7.8 3.8 H15 Q15.9 3.8 15.9 4.7 V15.6 Q15.9 16.4 15 16.4 H1.5 Q0.6 16.4 0.6 15.6Z" fill="url(#gFold2)" stroke="#d9a830" stroke-width="0.8"/><path d="M1.4 5.2 H15.1" stroke="#fff6cf" stroke-width="0.9"/><g transform="translate(2.2,8.4) scale(0.9)"><rect x="0" y="3.1" width="4" height="1.5" fill="#4c4c56"/><rect x="0" y="6.6" width="4" height="1.5" fill="#4c4c56"/><rect x="13.4" y="4.6" width="4" height="1.5" fill="#4c4c56"/><rect x="3.4" y="0" width="10.4" height="10.8" rx="0.8" fill="#4c4c56"/><rect x="3.4" y="8.6" width="10.4" height="2.2" rx="0.8" fill="#33333a"/><rect x="7.2" y="2.4" width="4.8" height="5.6" fill="#e8e8ee"/></g></svg>
<svg style="left:83px;top:155.1px" width="19" height="17" viewBox="0 0 19 17" ><rect x="0" y="2.6" width="13.8" height="13.4" fill="url(#gBlueSq)"/><rect x="0" y="14.8" width="13.8" height="1.4" fill="#1420a8"/><line x1="14.11" y1="5.66" x2="16.99" y2="6.85" stroke="#2e8a8a" stroke-width="1.5" opacity="0.85"/><line x1="13.46" y1="6.31" x2="14.65" y2="9.19" stroke="#2e8a8a" stroke-width="1.5" opacity="0.85"/><line x1="12.54" y1="6.31" x2="11.35" y2="9.19" stroke="#2e8a8a" stroke-width="1.5" opacity="0.85"/><line x1="11.89" y1="5.66" x2="9.01" y2="6.85" stroke="#2e8a8a" stroke-width="1.5" opacity="0.85"/><line x1="11.89" y1="4.74" x2="9.01" y2="3.55" stroke="#2e8a8a" stroke-width="1.5" opacity="0.85"/><line x1="12.54" y1="4.09" x2="11.35" y2="1.21" stroke="#2e8a8a" stroke-width="1.5" opacity="0.85"/><line x1="13.46" y1="4.09" x2="14.65" y2="1.21" stroke="#2e8a8a" stroke-width="1.5" opacity="0.85"/><line x1="14.11" y1="4.74" x2="16.99" y2="3.55" stroke="#2e8a8a" stroke-width="1.5" opacity="0.85"/><line x1="13.00" y1="5.20" x2="17.70" y2="5.20" stroke="#fff23a" stroke-width="1.5" stroke-linecap="round"/><line x1="13.00" y1="5.20" x2="16.32" y2="8.52" stroke="#fff23a" stroke-width="1.5" stroke-linecap="round"/><line x1="13.00" y1="5.20" x2="13.00" y2="9.90" stroke="#fff23a" stroke-width="1.5" stroke-linecap="round"/><line x1="13.00" y1="5.20" x2="9.68" y2="8.52" stroke="#fff23a" stroke-width="1.5" stroke-linecap="round"/><line x1="13.00" y1="5.20" x2="8.30" y2="5.20" stroke="#fff23a" stroke-width="1.5" stroke-linecap="round"/><line x1="13.00" y1="5.20" x2="9.68" y2="1.88" stroke="#fff23a" stroke-width="1.5" stroke-linecap="round"/><line x1="13.00" y1="5.20" x2="13.00" y2="0.50" stroke="#fff23a" stroke-width="1.5" stroke-linecap="round"/><line x1="13.00" y1="5.20" x2="16.32" y2="1.88" stroke="#fff23a" stroke-width="1.5" stroke-linecap="round"/><circle cx="13.00" cy="5.20" r="1.97" fill="#ffff66"/></svg>
<svg style="left:82.8px;top:180px" width="18" height="11" viewBox="0 0 18 11" ><rect x="0" y="3.1" width="4" height="1.5" fill="#b422ea"/><rect x="0" y="6.6" width="4" height="1.5" fill="#b422ea"/><rect x="13.4" y="4.6" width="4" height="1.5" fill="#b422ea"/><rect x="3.4" y="0" width="10.4" height="10.8" rx="0.8" fill="#b422ea"/><rect x="3.4" y="8.6" width="10.4" height="2.2" rx="0.8" fill="#7c12b4"/><rect x="7.2" y="2.4" width="4.8" height="5.6" fill="#e868ff"/></svg>
<svg style="left:82.8px;top:201.7px" width="18" height="11" viewBox="0 0 18 11" ><rect x="0" y="3.1" width="4" height="1.5" fill="#18a024"/><rect x="0" y="6.6" width="4" height="1.5" fill="#18a024"/><rect x="13.4" y="4.6" width="4" height="1.5" fill="#18a024"/><rect x="3.4" y="0" width="10.4" height="10.8" rx="0.8" fill="#18a024"/><rect x="3.4" y="8.6" width="10.4" height="2.2" rx="0.8" fill="#0c6a34"/><rect x="7.2" y="2.4" width="4.8" height="5.6" fill="#48d848"/></svg>
<svg style="left:82.8px;top:223.4px" width="18" height="11" viewBox="0 0 18 11" ><rect x="0" y="3.1" width="4" height="1.5" fill="#1c7cf2"/><rect x="0" y="6.6" width="4" height="1.5" fill="#1c7cf2"/><rect x="13.4" y="4.6" width="4" height="1.5" fill="#1c7cf2"/><rect x="3.4" y="0" width="10.4" height="10.8" rx="0.8" fill="#1c7cf2"/><rect x="3.4" y="8.6" width="10.4" height="2.2" rx="0.8" fill="#1234b4"/><rect x="7.2" y="2.4" width="4.8" height="5.6" fill="#48bcff"/></svg>
<svg style="left:82.8px;top:245.1px" width="18" height="11" viewBox="0 0 18 11" ><rect x="0" y="3.1" width="4" height="1.5" fill="#1c7cf2"/><rect x="0" y="6.6" width="4" height="1.5" fill="#1c7cf2"/><rect x="13.4" y="4.6" width="4" height="1.5" fill="#1c7cf2"/><rect x="3.4" y="0" width="10.4" height="10.8" rx="0.8" fill="#1c7cf2"/><rect x="3.4" y="8.6" width="10.4" height="2.2" rx="0.8" fill="#1234b4"/><rect x="7.2" y="2.4" width="4.8" height="5.6" fill="#48bcff"/></svg>
<svg style="left:82.8px;top:266.8px" width="18" height="11" viewBox="0 0 18 11" ><rect x="0" y="3.1" width="4" height="1.5" fill="#1c7cf2"/><rect x="0" y="6.6" width="4" height="1.5" fill="#1c7cf2"/><rect x="13.4" y="4.6" width="4" height="1.5" fill="#1c7cf2"/><rect x="3.4" y="0" width="10.4" height="10.8" rx="0.8" fill="#1c7cf2"/><rect x="3.4" y="8.6" width="10.4" height="2.2" rx="0.8" fill="#1234b4"/><rect x="7.2" y="2.4" width="4.8" height="5.6" fill="#48bcff"/></svg>
<svg style="left:86.2px;top:285.5px" width="12" height="15.4" viewBox="0 0 12 15.4" ><path d="M0 2.64 V12.56 A6 2.64 0 0 0 12 12.56 V2.64 Z" fill="url(#gCyl)"/><path d="M0 12.26 A6 2.64 0 0 0 12 12.26" fill="none" stroke="#1a22a4" stroke-width="1.2"/><ellipse cx="6" cy="2.64" rx="6" ry="2.64" fill="#8c9cff"/></svg>
<svg style="left:86.2px;top:307.2px" width="12" height="15.4" viewBox="0 0 12 15.4" ><path d="M0 2.64 V12.56 A6 2.64 0 0 0 12 12.56 V2.64 Z" fill="url(#gCyl)"/><path d="M0 12.26 A6 2.64 0 0 0 12 12.26" fill="none" stroke="#1a22a4" stroke-width="1.2"/><ellipse cx="6" cy="2.64" rx="6" ry="2.64" fill="#8c9cff"/></svg>
<svg style="left:86.2px;top:328.9px" width="12" height="15.4" viewBox="0 0 12 15.4" ><path d="M0 2.64 V12.56 A6 2.64 0 0 0 12 12.56 V2.64 Z" fill="url(#gCyl)"/><path d="M0 12.26 A6 2.64 0 0 0 12 12.26" fill="none" stroke="#1a22a4" stroke-width="1.2"/><ellipse cx="6" cy="2.64" rx="6" ry="2.64" fill="#8c9cff"/></svg>
<svg style="left:86.2px;top:350.6px" width="12" height="15.4" viewBox="0 0 12 15.4" ><path d="M0 2.64 V12.56 A6 2.64 0 0 0 12 12.56 V2.64 Z" fill="url(#gCyl)"/><path d="M0 12.26 A6 2.64 0 0 0 12 12.26" fill="none" stroke="#1a22a4" stroke-width="1.2"/><ellipse cx="6" cy="2.64" rx="6" ry="2.64" fill="#8c9cff"/></svg>
<svg style="left:86.2px;top:372.3px" width="12" height="15.4" viewBox="0 0 12 15.4" ><path d="M0 2.64 V12.56 A6 2.64 0 0 0 12 12.56 V2.64 Z" fill="url(#gCyl)"/><path d="M0 12.26 A6 2.64 0 0 0 12 12.26" fill="none" stroke="#1a22a4" stroke-width="1.2"/><ellipse cx="6" cy="2.64" rx="6" ry="2.64" fill="#8c9cff"/></svg>
<svg style="left:48.5px;top:397.5px" width="6" height="9" viewBox="0 0 6 9"><path d="M0.3 0.2 L5.5 4.5 L0.3 8.8Z" fill="#15151a"/></svg>
<svg style="left:62.4px;top:391.9px" width="19" height="19" viewBox="0 0 19 19" ><path d="M0.6 15.6 V2.6 Q0.6 1.6 1.6 1.6 H5.4 Q6.2 1.6 6.8 2.4 L7.8 3.8 H15 Q15.9 3.8 15.9 4.7 V15.6 Q15.9 16.4 15 16.4 H1.5 Q0.6 16.4 0.6 15.6Z" fill="url(#gFold2)" stroke="#d9a830" stroke-width="0.8"/><path d="M1.4 5.2 H15.1" stroke="#fff6cf" stroke-width="0.9"/><line x1="11.60" y1="11.20" x2="17.00" y2="11.20" stroke="#2468f4" stroke-width="1.7" stroke-linecap="round"/><line x1="11.60" y1="11.20" x2="15.42" y2="15.02" stroke="#2468f4" stroke-width="1.7" stroke-linecap="round"/><line x1="11.60" y1="11.20" x2="11.60" y2="16.60" stroke="#2468f4" stroke-width="1.7" stroke-linecap="round"/><line x1="11.60" y1="11.20" x2="7.78" y2="15.02" stroke="#2468f4" stroke-width="1.7" stroke-linecap="round"/><line x1="11.60" y1="11.20" x2="6.20" y2="11.20" stroke="#2468f4" stroke-width="1.7" stroke-linecap="round"/><line x1="11.60" y1="11.20" x2="7.78" y2="7.38" stroke="#2468f4" stroke-width="1.7" stroke-linecap="round"/><line x1="11.60" y1="11.20" x2="11.60" y2="5.80" stroke="#2468f4" stroke-width="1.7" stroke-linecap="round"/><line x1="11.60" y1="11.20" x2="15.42" y2="7.38" stroke="#2468f4" stroke-width="1.7" stroke-linecap="round"/><circle cx="11.6" cy="11.2" r="1.5" fill="#1a2a6a"/></svg>
<svg style="left:48.5px;top:419.2px" width="6" height="9" viewBox="0 0 6 9"><path d="M0.3 0.2 L5.5 4.5 L0.3 8.8Z" fill="#15151a"/></svg>
<svg style="left:62.4px;top:413.6px" width="19" height="19" viewBox="0 0 19 19" ><path d="M0.6 15.6 V2.6 Q0.6 1.6 1.6 1.6 H5.4 Q6.2 1.6 6.8 2.4 L7.8 3.8 H15 Q15.9 3.8 15.9 4.7 V15.6 Q15.9 16.4 15 16.4 H1.5 Q0.6 16.4 0.6 15.6Z" fill="url(#gFold2)" stroke="#d9a830" stroke-width="0.8"/><path d="M1.4 5.2 H15.1" stroke="#fff6cf" stroke-width="0.9"/><rect x="5" y="7" width="10.6" height="9.6" fill="#dcdce6" stroke="#8a8a9c" stroke-width="1"/><rect x="3.4" y="10.8" width="1.8" height="1.2" fill="#8a8a9c"/><rect x="15.6" y="10.8" width="1.8" height="1.2" fill="#8a8a9c"/><rect x="7.2" y="9.4" width="2.6" height="4.8" fill="none" stroke="#20265c" stroke-width="1.1"/><rect x="11.8" y="8.9" width="1.3" height="5.8" fill="#20265c"/></svg>
<svg style="left:48.5px;top:440.9px" width="6" height="9" viewBox="0 0 6 9"><path d="M0.3 0.2 L5.5 4.5 L0.3 8.8Z" fill="#15151a"/></svg>
<svg style="left:62.4px;top:435.3px" width="19" height="19" viewBox="0 0 19 19" ><path d="M0.6 15.6 V2.6 Q0.6 1.6 1.6 1.6 H5.4 Q6.2 1.6 6.8 2.4 L7.8 3.8 H15 Q15.9 3.8 15.9 4.7 V15.6 Q15.9 16.4 15 16.4 H1.5 Q0.6 16.4 0.6 15.6Z" fill="url(#gFold2)" stroke="#d9a830" stroke-width="0.8"/><path d="M1.4 5.2 H15.1" stroke="#fff6cf" stroke-width="0.9"/><path d="M3.6 13 L7 10 H17.2 V17.2 H7 Z" fill="#6424c4"/><path d="M7 10 H17.2 V11.6 H7Z" fill="#8448dc"/><circle cx="7" cy="13.4" r="0.8" fill="#f0e8ff"/><rect x="17" y="11.2" width="0.8" height="6.2" fill="#3a1478"/></svg>
<svg style="left:48.5px;top:462.6px" width="6" height="9" viewBox="0 0 6 9"><path d="M0.3 0.2 L5.5 4.5 L0.3 8.8Z" fill="#15151a"/></svg>
<svg style="left:62.4px;top:457px" width="19" height="19" viewBox="0 0 19 19" ><path d="M0.6 15.6 V2.6 Q0.6 1.6 1.6 1.6 H5.4 Q6.2 1.6 6.8 2.4 L7.8 3.8 H15 Q15.9 3.8 15.9 4.7 V15.6 Q15.9 16.4 15 16.4 H1.5 Q0.6 16.4 0.6 15.6Z" fill="url(#gFold2)" stroke="#d9a830" stroke-width="0.8"/><path d="M1.4 5.2 H15.1" stroke="#fff6cf" stroke-width="0.9"/><rect x="7" y="5" width="10" height="12.4" fill="#f0f0ff" stroke="#98a4f0" stroke-width="1"/><rect x="7" y="16.6" width="10" height="1.3" fill="#7c8cf0"/><path d="M10 11.2 H12 M12 8.2 V14.4 M12 8.2 H14.8 M12 11.2 H14.8 M12 14.4 H14.8" stroke="#20265c" stroke-width="1.2" fill="none"/></svg>
<svg style="left:48.5px;top:484.3px" width="6" height="9" viewBox="0 0 6 9"><path d="M0.3 0.2 L5.5 4.5 L0.3 8.8Z" fill="#15151a"/></svg>
<svg style="left:62.4px;top:478.7px" width="19" height="19" viewBox="0 0 19 19" ><path d="M0.6 15.6 V2.6 Q0.6 1.6 1.6 1.6 H5.4 Q6.2 1.6 6.8 2.4 L7.8 3.8 H15 Q15.9 3.8 15.9 4.7 V15.6 Q15.9 16.4 15 16.4 H1.5 Q0.6 16.4 0.6 15.6Z" fill="url(#gFold2)" stroke="#d9a830" stroke-width="0.8"/><path d="M1.4 5.2 H15.1" stroke="#fff6cf" stroke-width="0.9"/><rect x="4.6" y="4.8" width="12.8" height="7.4" fill="#f0f0ff" stroke="#98a4f0" stroke-width="1"/><rect x="6.4" y="6.4" width="2" height="1.1" fill="#3a4488"/><rect x="6.4" y="8.3" width="2" height="1.1" fill="#3a4488"/><rect x="6.4" y="10.2" width="2" height="1.1" fill="#3a4488"/><rect x="9.7" y="6.4" width="2" height="1.1" fill="#3a4488"/><rect x="9.7" y="8.3" width="2" height="1.1" fill="#3a4488"/><rect x="9.7" y="10.2" width="2" height="1.1" fill="#3a4488"/><rect x="13" y="6.4" width="2" height="1.1" fill="#3a4488"/><rect x="13" y="8.3" width="2" height="1.1" fill="#3a4488"/><rect x="13" y="10.2" width="2" height="1.1" fill="#3a4488"/><circle cx="5.6" cy="14.2" r="2.1" fill="none" stroke="#28307c" stroke-width="1.3"/><circle cx="12.4" cy="14.2" r="2.1" fill="none" stroke="#28307c" stroke-width="1.3"/><path d="M7.7 13.8 H10.3 M14.5 13.6 L17.6 12.8 M3.5 13.6 L2.4 13" stroke="#28307c" stroke-width="1.2"/></svg>
<svg style="left:48.5px;top:506px" width="6" height="9" viewBox="0 0 6 9"><path d="M0.3 0.2 L5.5 4.5 L0.3 8.8Z" fill="#15151a"/></svg>
<svg style="left:62.4px;top:500.4px" width="19" height="19" viewBox="0 0 19 19" ><path d="M0.6 15.6 V2.6 Q0.6 1.6 1.6 1.6 H5.4 Q6.2 1.6 6.8 2.4 L7.8 3.8 H15 Q15.9 3.8 15.9 4.7 V15.6 Q15.9 16.4 15 16.4 H1.5 Q0.6 16.4 0.6 15.6Z" fill="url(#gFold2)" stroke="#d9a830" stroke-width="0.8"/><path d="M1.4 5.2 H15.1" stroke="#fff6cf" stroke-width="0.9"/><g transform="translate(5.8,5.4)"><path d="M0 1.54 V6.66 A3.5 1.54 0 0 0 7 6.66 V1.54 Z" fill="url(#gCyl)"/><path d="M0 6.36 A3.5 1.54 0 0 0 7 6.36" fill="none" stroke="#1a22a4" stroke-width="1.2"/><ellipse cx="3.5" cy="1.54" rx="3.5" ry="1.54" fill="#7c90ff"/></g><g transform="translate(10.4,8.6)"><path d="M0 1.584 V6.416 A3.6 1.584 0 0 0 7.2 6.416 V1.584 Z" fill="url(#gOrCyl)"/><path d="M0 6.116 A3.6 1.584 0 0 0 7.2 6.116" fill="none" stroke="#c03c04" stroke-width="1.2"/><ellipse cx="3.6" cy="1.584" rx="3.6" ry="1.584" fill="#ffa060"/></g></svg>
<svg style="left:48.5px;top:527.7px" width="6" height="9" viewBox="0 0 6 9"><path d="M0.3 0.2 L5.5 4.5 L0.3 8.8Z" fill="#15151a"/></svg>
<svg style="left:62.4px;top:522.1px" width="19" height="19" viewBox="0 0 19 19" ><path d="M0.6 15.6 V2.6 Q0.6 1.6 1.6 1.6 H5.4 Q6.2 1.6 6.8 2.4 L7.8 3.8 H15 Q15.9 3.8 15.9 4.7 V15.6 Q15.9 16.4 15 16.4 H1.5 Q0.6 16.4 0.6 15.6Z" fill="url(#gFold2)" stroke="#d9a830" stroke-width="0.8"/><path d="M1.4 5.2 H15.1" stroke="#fff6cf" stroke-width="0.9"/><rect x="3.4" y="6" width="14.2" height="10.8" fill="url(#gTrace)"/><path d="M3.8 12.6 C6 12.6 6.4 9.4 8.6 9.4 C10.8 9.4 10.8 12 12.8 12 C14.6 12 15 9.6 17.4 9.4" fill="none" stroke="#eaf4ff" stroke-width="1.1"/><rect x="3.4" y="15.8" width="14.2" height="1.2" fill="#22588c"/></svg>
<svg style="left:48.5px;top:549.4px" width="6" height="9" viewBox="0 0 6 9"><path d="M0.3 0.2 L5.5 4.5 L0.3 8.8Z" fill="#15151a"/></svg>
<svg style="left:62.4px;top:542.9px" width="19" height="19" viewBox="0 0 19 19" ><path d="M0.6 15.6 V2.6 Q0.6 1.6 1.6 1.6 H5.4 Q6.2 1.6 6.8 2.4 L7.8 3.8 H15 Q15.9 3.8 15.9 4.7 V15.6 Q15.9 16.4 15 16.4 H1.5 Q0.6 16.4 0.6 15.6Z" fill="url(#gFold2)" stroke="#d9a830" stroke-width="0.8"/><path d="M1.4 5.2 H15.1" stroke="#fff6cf" stroke-width="0.9"/><circle cx="11" cy="9" r="4" fill="#5a68d8"/></svg>
</div>
<span class="t" style="top:189.50px;font-size:13px;line-height:13px;color:#241c26;left:71.50px;-webkit-text-stroke:0.18px #241c26;letter-spacing:0.511px;">DiplomArbeit24.8.24</span>
<span class="t" style="top:211.20px;font-size:13px;line-height:13px;color:#241c26;left:92.40px;-webkit-text-stroke:0.18px #241c26;letter-spacing:0.303px;">Neues Ger&auml;t hinzuf&uuml;gen</span>
<span class="t" style="top:232.90px;font-size:13px;line-height:13px;color:#241c26;left:92.40px;-webkit-text-stroke:0.18px #241c26;letter-spacing:0.115px;">Ger&auml;te &amp; Netze</span>
<span class="t" style="top:254.60px;font-size:13px;line-height:13px;color:#241c26;left:92.40px;-webkit-text-stroke:0.45px #241c26;letter-spacing:-0.344px;">PLC_1 [CPU 1214C AC/DC/R...</span>
<span class="t" style="top:276.30px;font-size:13px;line-height:13px;color:#241c26;left:113.00px;-webkit-text-stroke:0.18px #241c26;letter-spacing:0.445px;">Ger&auml;tekonfiguration</span>
<span class="t" style="top:298.00px;font-size:13px;line-height:13px;color:#241c26;left:113.00px;-webkit-text-stroke:0.18px #241c26;letter-spacing:0.443px;">Online &amp; Diagnose</span>
<span class="t" style="top:319.70px;font-size:13px;line-height:13px;color:#241c26;left:113.00px;-webkit-text-stroke:0.18px #241c26;letter-spacing:0.602px;">Programmbausteine</span>
<div style="left:27px;top:336.3px;width:248px;height:22px;overflow:hidden"><span class="t" style="top:5.10px;font-size:13px;line-height:13px;color:#241c26;left:106.40px;-webkit-text-stroke:0.18px #241c26;letter-spacing:0.298px;">Neuen Baustein hinzu...</span></div>
<span class="t" style="top:363.10px;font-size:13px;line-height:13px;color:#241c26;left:133.40px;-webkit-text-stroke:0.18px #241c26;letter-spacing:0.285px;">Main [OB1]</span>
<span class="t" style="top:384.80px;font-size:13px;line-height:13px;color:#241c26;left:133.40px;-webkit-text-stroke:0.18px #241c26;letter-spacing:0.047px;">Out Puts [FC1]</span>
<span class="t" style="top:406.50px;font-size:13px;line-height:13px;color:#241c26;left:133.40px;-webkit-text-stroke:0.18px #241c26;letter-spacing:0.420px;">Automatic Mode [FB3]</span>
<span class="t" style="top:428.20px;font-size:13px;line-height:13px;color:#241c26;left:133.40px;-webkit-text-stroke:0.18px #241c26;letter-spacing:0.371px;">manual_conveyor [F...</span>
<span class="t" style="top:449.90px;font-size:13px;line-height:13px;color:#241c26;left:133.40px;-webkit-text-stroke:0.18px #241c26;letter-spacing:0.354px;">Manual_robot [FB2]</span>
<span class="t" style="top:471.60px;font-size:13px;line-height:13px;color:#241c26;left:133.40px;-webkit-text-stroke:0.18px #241c26;letter-spacing:0.226px;">Automatic Mode_DB ...</span>
<span class="t" style="top:493.30px;font-size:13px;line-height:13px;color:#241c26;left:133.40px;-webkit-text-stroke:0.18px #241c26;letter-spacing:0.328px;">manual_conveyor_K...</span>
<span class="t" style="top:515.00px;font-size:13px;line-height:13px;color:#241c26;left:133.40px;-webkit-text-stroke:0.18px #241c26;letter-spacing:0.328px;">manual_conveyor_K...</span>
<span class="t" style="top:536.70px;font-size:13px;line-height:13px;color:#241c26;left:133.40px;-webkit-text-stroke:0.18px #241c26;letter-spacing:0.328px;">manual_conveyor_K...</span>
<span class="t" style="top:558.40px;font-size:13px;line-height:13px;color:#241c26;left:133.40px;-webkit-text-stroke:0.18px #241c26;letter-spacing:0.203px;">Manual_robot_DB [D...</span>
<span class="t" style="top:580.10px;font-size:13px;line-height:13px;color:#241c26;left:113.00px;-webkit-text-stroke:0.18px #241c26;letter-spacing:0.529px;">Technologieobjekte</span>
<span class="t" style="top:601.80px;font-size:13px;line-height:13px;color:#241c26;left:113.00px;-webkit-text-stroke:0.18px #241c26;letter-spacing:0.340px;">Externe Quellen</span>
<span class="t" style="top:623.50px;font-size:13px;line-height:13px;color:#241c26;left:113.00px;-webkit-text-stroke:0.18px #241c26;letter-spacing:-0.049px;">PLC-Variablen</span>
<span class="t" style="top:645.20px;font-size:13px;line-height:13px;color:#241c26;left:113.00px;-webkit-text-stroke:0.18px #241c26;letter-spacing:-0.010px;">PLC-Datentypen</span>
<span class="t" style="top:666.90px;font-size:13px;line-height:13px;color:#241c26;left:113.00px;-webkit-text-stroke:0.18px #241c26;letter-spacing:0.242px;">Beobachtungs- und Forc...</span>
<span class="t" style="top:688.60px;font-size:13px;line-height:13px;color:#241c26;left:113.00px;-webkit-text-stroke:0.18px #241c26;letter-spacing:0.417px;">Online-Sicherungen</span>
<span class="t" style="top:710.30px;font-size:13px;line-height:13px;color:#241c26;left:113.00px;-webkit-text-stroke:0.18px #241c26;letter-spacing:-0.250px;">Traces</span>
<div style="left:27px;top:727px;width:247px;height:9.3px;overflow:hidden"><span class="t" style="top:5.00px;font-size:13px;line-height:13px;color:#241c26;left:86.00px;-webkit-text-stroke:0.18px #241c26;letter-spacing:0.275px;">OPC UA-Kommunikation</span></div>
<div style="left:297px;top:184px;width:21px;height:552px;background:#c6c6c6;"></div>
<div style="left:299px;top:187px;width:17.5px;height:18px;background:linear-gradient(#f4f4f4,#dcdcdc);border:1px solid #b3b3b5"></div>
<svg style="left:302px;top:191px" width="12" height="10" viewBox="0 0 12 10"><path d="M1.5 7.5 L6 2.8 L10.5 7.5" fill="none" stroke="#4a4a4c" stroke-width="1.9"/></svg>
<div style="left:297.4px;top:208.6px;width:20.3px;height:196.2px;background:linear-gradient(90deg,#e8e8e8,#d3d3d3);border:1px solid #b0b0b0;box-shadow:inset 0 0 0 1.2px #f4f4f4"></div>
<div style="left:303.5px;top:302.5px;width:8.5px;height:1px;background:#6f6f72;"></div>
<div style="left:303.5px;top:304.5px;width:8.5px;height:1px;background:#6f6f72;"></div>
<div style="left:303.5px;top:306.5px;width:8.5px;height:1px;background:#6f6f72;"></div>
<div style="left:303.5px;top:308.5px;width:8.5px;height:1px;background:#6f6f72;"></div>
<div style="left:299px;top:717px;width:17.5px;height:18px;background:linear-gradient(#f4f4f4,#dcdcdc);border:1px solid #b3b3b5"></div>
<svg style="left:302px;top:721px" width="12" height="10" viewBox="0 0 12 10"><path d="M1.5 2.8 L6 7.5 L10.5 2.8" fill="none" stroke="#4a4a4c" stroke-width="1.9"/></svg>
<div style="left:27px;top:736px;width:291px;height:20px;background:#c6c6c6;"></div>
<div style="left:28px;top:738px;width:18.5px;height:17px;background:linear-gradient(#f4f4f4,#dcdcdc);border:1px solid #b3b3b5"></div>
<svg style="left:32px;top:741px" width="10" height="12" viewBox="0 0 10 12"><path d="M7.3 1.5 L2.8 6 L7.3 10.5" fill="none" stroke="#4a4a4c" stroke-width="1.9"/></svg>
<div style="left:49.5px;top:738px;width:218px;height:17px;background:linear-gradient(#efefef,#d6d6d7);border:1px solid #a9a9ab"></div>
<div style="left:154px;top:742.5px;width:1px;height:8.5px;background:#6f6f72;"></div>
<div style="left:156px;top:742.5px;width:1px;height:8.5px;background:#6f6f72;"></div>
<div style="left:158px;top:742.5px;width:1px;height:8.5px;background:#6f6f72;"></div>
<div style="left:160px;top:742.5px;width:1px;height:8.5px;background:#6f6f72;"></div>
<div style="left:276px;top:738px;width:20px;height:17px;background:linear-gradient(#f4f4f4,#dcdcdc);border:1px solid #b3b3b5"></div>
<svg style="left:281px;top:741px" width="10" height="12" viewBox="0 0 10 12"><path d="M2.7 1.5 L7.2 6 L2.7 10.5" fill="none" stroke="#4a4a4c" stroke-width="1.9"/></svg>
<div style="left:27px;top:756px;width:291px;height:3.8px;background:#1f2438;"></div>
<div style="left:27px;top:759.8px;width:291px;height:24.2px;background:linear-gradient(#ececec,#d6d6d6);"></div>
<div style="left:49.5px;top:761px;width:1px;height:23px;background:#9a9a9c;"></div>
<svg style="left:31px;top:766px" width="10" height="12" viewBox="0 0 10 12"><path d="M2 1.2 L7.2 6 L2 10.8" fill="none" stroke="#15151a" stroke-width="2.2"/></svg>
<span class="t" style="top:764.30px;font-size:15px;line-height:15px;color:#1c1a22;left:56.00px;-webkit-text-stroke:0.5px #1c1a22;letter-spacing:0.651px;">Referenzprojekte</span>
<div style="left:27px;top:783.8px;width:291px;height:3.5px;background:#1f2438;"></div>
<div style="left:27px;top:787.3px;width:291px;height:23.4px;background:linear-gradient(#ececec,#d6d6d6);border-bottom:1px solid #a2a2a2"></div>
<div style="left:49.5px;top:788px;width:1px;height:23px;background:#9a9a9c;"></div>
<svg style="left:32px;top:794px" width="12" height="10" viewBox="0 0 12 10"><path d="M1.2 2.5 L6 7.4 L10.8 2.5" fill="none" stroke="#15151a" stroke-width="2.2"/></svg>
<span class="t" style="top:791.70px;font-size:15px;line-height:15px;color:#1c1a22;left:56.00px;-webkit-text-stroke:0.5px #1c1a22;letter-spacing:0.926px;">Detailansicht</span>
<div style="left:27px;top:810.7px;width:291px;height:29.3px;background:#c4c4c4;"></div>
<div style="left:27px;top:840px;width:291px;height:6px;background:#e9e9ea;"></div>
<div style="left:27px;top:839.5px;width:291px;height:1px;background:#a5a5a7;"></div>
<div style="left:321.5px;top:48.5px;width:478.5px;height:27.8px;background:#2a314c;"></div>
<span class="t" style="top:55.36px;font-size:16px;line-height:16px;color:#f0f1f5;left:327.50px;-webkit-text-stroke:0.35px #f0f1f5;letter-spacing:0.446px;">DiplomArbeit24.8.24</span>
<svg style="left:492.8px;top:57.6px" width="6" height="11" viewBox="0 0 6 11"><path d="M0.2 0.3 L5.6 5.3 L0.2 10.3Z" fill="#f4f5f8"/></svg>
<span class="t" style="top:55.36px;font-size:16px;line-height:16px;color:#f0f1f5;left:510.75px;-webkit-text-stroke:0.35px #f0f1f5;letter-spacing:-0.924px;word-spacing:3px;">PLC_1 [CPU 1214C AC/DC/Rly]</span>
<svg style="left:737.3px;top:57.6px" width="6" height="11" viewBox="0 0 6 11"><path d="M0.2 0.3 L5.6 5.3 L0.2 10.3Z" fill="#f4f5f8"/></svg>
<span class="t" style="top:55.36px;font-size:16px;line-height:16px;color:#f0f1f5;left:755.00px;-webkit-text-stroke:0.35px #f0f1f5;letter-spacing:0.120px;">Programmbausteine</span>
<div style="left:321.5px;top:76.3px;width:478.5px;height:2.8px;background:#eeeeee;"></div>
<div style="left:321.5px;top:79.1px;width:478.5px;height:28px;background:#c9c9c9;"></div>
<div style="left:321.5px;top:106.5px;width:478.5px;height:1px;background:#9a9a9a;"></div>
<div style="left:321.5px;top:107.5px;width:478.5px;height:31.5px;background:#e8e8e8;"></div>
<svg style="left:328.8px;top:123.9px" width="18" height="8.4" viewBox="0 0 18 8.4" ><rect x="0" y="0" width="2.5" height="8.4" fill="#2636f2"/><rect x="15.5" y="0" width="2.5" height="8.4" fill="#2636f2"/><path d="M8 0.5 L3.2 4.2 L8 7.9 M10 0.5 L14.8 4.2 L10 7.9" fill="none" stroke="#2636f2" stroke-width="2.1"/><rect x="2" y="3.2" width="2.4" height="2" fill="#2636f2"/><rect x="13.6" y="3.2" width="2.4" height="2" fill="#2636f2"/></svg>
<svg style="left:336px;top:113px" width="13" height="13" viewBox="0 0 13 13" ><line x1="7.41" y1="6.96" x2="10.72" y2="8.33" stroke="#2e8a8a" stroke-width="1.5" opacity="0.85"/><line x1="6.76" y1="7.61" x2="8.13" y2="10.92" stroke="#2e8a8a" stroke-width="1.5" opacity="0.85"/><line x1="5.84" y1="7.61" x2="4.47" y2="10.92" stroke="#2e8a8a" stroke-width="1.5" opacity="0.85"/><line x1="5.19" y1="6.96" x2="1.88" y2="8.33" stroke="#2e8a8a" stroke-width="1.5" opacity="0.85"/><line x1="5.19" y1="6.04" x2="1.88" y2="4.67" stroke="#2e8a8a" stroke-width="1.5" opacity="0.85"/><line x1="5.84" y1="5.39" x2="4.47" y2="2.08" stroke="#2e8a8a" stroke-width="1.5" opacity="0.85"/><line x1="6.76" y1="5.39" x2="8.13" y2="2.08" stroke="#2e8a8a" stroke-width="1.5" opacity="0.85"/><line x1="7.41" y1="6.04" x2="10.72" y2="4.67" stroke="#2e8a8a" stroke-width="1.5" opacity="0.85"/><line x1="6.30" y1="6.50" x2="11.50" y2="6.50" stroke="#fff23a" stroke-width="1.5" stroke-linecap="round"/><line x1="6.30" y1="6.50" x2="9.98" y2="10.18" stroke="#fff23a" stroke-width="1.5" stroke-linecap="round"/><line x1="6.30" y1="6.50" x2="6.30" y2="11.70" stroke="#fff23a" stroke-width="1.5" stroke-linecap="round"/><line x1="6.30" y1="6.50" x2="2.62" y2="10.18" stroke="#fff23a" stroke-width="1.5" stroke-linecap="round"/><line x1="6.30" y1="6.50" x2="1.10" y2="6.50" stroke="#fff23a" stroke-width="1.5" stroke-linecap="round"/><line x1="6.30" y1="6.50" x2="2.62" y2="2.82" stroke="#fff23a" stroke-width="1.5" stroke-linecap="round"/><line x1="6.30" y1="6.50" x2="6.30" y2="1.30" stroke="#fff23a" stroke-width="1.5" stroke-linecap="round"/><line x1="6.30" y1="6.50" x2="9.98" y2="2.82" stroke="#fff23a" stroke-width="1.5" stroke-linecap="round"/><circle cx="6.30" cy="6.50" r="2.18" fill="#ffff66"/></svg>
<svg style="left:356.8px;top:123.9px" width="18" height="8.4" viewBox="0 0 18 8.4" ><rect x="0" y="0" width="2.5" height="8.4" fill="#2636f2"/><rect x="15.5" y="0" width="2.5" height="8.4" fill="#2636f2"/><path d="M8 0.5 L3.2 4.2 L8 7.9 M10 0.5 L14.8 4.2 L10 7.9" fill="none" stroke="#2636f2" stroke-width="2.1"/><rect x="2" y="3.2" width="2.4" height="2" fill="#2636f2"/><rect x="13.6" y="3.2" width="2.4" height="2" fill="#2636f2"/></svg>
<svg style="left:365.3px;top:116px" width="10" height="9.5" viewBox="0 0 10 9.5" ><path d="M1 0.8 L9 8.6 M9 0.8 L1 8.6" stroke="#15144e" stroke-width="2.2" fill="none"/></svg>
<svg style="left:384.2px;top:119.4px" width="12" height="13" viewBox="0 0 12 13" ><rect x="0" y="1" width="11.4" height="1.3" fill="#9a9a9a"/><rect x="0" y="4.6" width="11.4" height="1.3" fill="#9a9a9a"/><rect x="0" y="8.2" width="11.4" height="1.3" fill="#9a9a9a"/><rect x="2.6" y="11.2" width="8.8" height="1.6" fill="#7c7c7c"/></svg>
<svg style="left:392.5px;top:114px" width="12" height="12" viewBox="0 0 12 12" ><line x1="7.66" y1="6.69" x2="10.43" y2="7.84" stroke="#9a9a9a" stroke-width="1.1"/><line x1="6.69" y1="7.66" x2="7.84" y2="10.43" stroke="#9a9a9a" stroke-width="1.1"/><line x1="5.31" y1="7.66" x2="4.16" y2="10.43" stroke="#9a9a9a" stroke-width="1.1"/><line x1="4.34" y1="6.69" x2="1.57" y2="7.84" stroke="#9a9a9a" stroke-width="1.1"/><line x1="4.34" y1="5.31" x2="1.57" y2="4.16" stroke="#9a9a9a" stroke-width="1.1"/><line x1="5.31" y1="4.34" x2="4.16" y2="1.57" stroke="#9a9a9a" stroke-width="1.1"/><line x1="6.69" y1="4.34" x2="7.84" y2="1.57" stroke="#9a9a9a" stroke-width="1.1"/><line x1="7.66" y1="5.31" x2="10.43" y2="4.16" stroke="#9a9a9a" stroke-width="1.1"/><circle cx="6.00" cy="6.00" r="2.2" fill="#ffffff"/></svg>
<svg style="left:411.7px;top:119.4px" width="12" height="13" viewBox="0 0 12 13" ><rect x="0" y="1" width="11.4" height="1.3" fill="#9a9a9a"/><rect x="0" y="4.6" width="11.4" height="1.3" fill="#9a9a9a"/><rect x="0" y="8.2" width="11.4" height="1.3" fill="#9a9a9a"/><rect x="2.6" y="11.2" width="8.8" height="1.6" fill="#7c7c7c"/></svg>
<svg style="left:420px;top:114px" width="12" height="12" viewBox="0 0 12 12" ><line x1="7.66" y1="6.69" x2="10.43" y2="7.84" stroke="#9a9a9a" stroke-width="1.1"/><line x1="6.69" y1="7.66" x2="7.84" y2="10.43" stroke="#9a9a9a" stroke-width="1.1"/><line x1="5.31" y1="7.66" x2="4.16" y2="10.43" stroke="#9a9a9a" stroke-width="1.1"/><line x1="4.34" y1="6.69" x2="1.57" y2="7.84" stroke="#9a9a9a" stroke-width="1.1"/><line x1="4.34" y1="5.31" x2="1.57" y2="4.16" stroke="#9a9a9a" stroke-width="1.1"/><line x1="5.31" y1="4.34" x2="4.16" y2="1.57" stroke="#9a9a9a" stroke-width="1.1"/><line x1="6.69" y1="4.34" x2="7.84" y2="1.57" stroke="#9a9a9a" stroke-width="1.1"/><line x1="7.66" y1="5.31" x2="10.43" y2="4.16" stroke="#9a9a9a" stroke-width="1.1"/><circle cx="6.00" cy="6.00" r="2.2" fill="#ffffff"/></svg>
<div style="left:436px;top:110px;width:1px;height:27px;background:repeating-linear-gradient(#b4b4b4 0 1px,#e2e2e2 1px 3px)"></div>
<svg style="left:444.7px;top:115.3px" width="18.5" height="17" viewBox="0 0 18.5 17" ><path d="M0 1.8 V10 A3.8 1.8 0 0 0 7.6 10 V1.8Z" fill="#8c8c8c"/><ellipse cx="3.8" cy="1.8" rx="3.8" ry="1.8" fill="#b4b4b4"/><path d="M9.6 11.4 L12.4 9 V10.6 C15.6 10.2 18 12 17.6 15 C17.4 16 17 16.4 16.2 16.6 C16.8 14.4 15.6 12.8 12.4 13 V14.6Z" fill="#8c8c8c"/></svg>
<div style="left:469px;top:110px;width:1px;height:27px;background:repeating-linear-gradient(#b4b4b4 0 1px,#e2e2e2 1px 3px)"></div>
<svg style="left:477.7px;top:116.8px" width="18.5" height="15.5" viewBox="0 0 18.5 15.5" ><rect x="0" y="0" width="7.4" height="3.4" fill="#5c5c5c"/><rect x="0" y="1.6" width="18.4" height="1.9" fill="#5c5c5c"/><rect x="0" y="5.8" width="7.4" height="3.4" fill="#5c5c5c"/><rect x="0" y="7.4" width="18.4" height="1.9" fill="#5c5c5c"/><rect x="0" y="11.6" width="7.4" height="3.4" fill="#5c5c5c"/><rect x="0" y="13.2" width="18.4" height="1.9" fill="#5c5c5c"/></svg>
<svg style="left:505.2px;top:115.3px" width="17.6" height="16.6" viewBox="0 0 17.6 16.6" ><rect x="0.6" y="0.6" width="16.4" height="15.4" fill="#f2f4ff" stroke="#3646ee" stroke-width="1.2"/><rect x="0.6" y="0.6" width="16.4" height="4.2" fill="#3a4af2"/><path d="M2.6 1.4 H8 L5.3 4Z" fill="#ffffff"/><rect x="2.4" y="8" width="13.4" height="1.3" fill="#232878"/><rect x="2.4" y="6.4" width="1.4" height="4.6" fill="#232878"/><rect x="1.2" y="11.4" width="15.2" height="4" fill="#d9dcfb"/></svg>
<svg style="left:532.5px;top:117.3px" width="17.2" height="13.4" viewBox="0 0 17.2 13.4" ><rect x="0" y="0" width="17.2" height="13.4" fill="url(#gBlueSq)"/><rect x="0" y="6.1" width="17.2" height="1.2" fill="#f2f4ff"/><path d="M0 1.4 L3.2 3.6 L0 5.8Z M0 7.8 L3.2 10 L0 12.2Z" fill="#f2f4ff"/></svg>
<div style="left:557px;top:111.6px;width:24.8px;height:24.6px;background:#f6f9ff;border:1.4px solid #5c8cde;border-radius:2.5px"></div>
<svg style="left:560.6px;top:115.6px" width="17.6" height="16" viewBox="0 0 17.6 16" ><path d="M8.8 0.7 C14 0.7 17 3.4 17 6.6 C17 10 13.6 12.4 8.8 12.4 C7.8 12.4 7 12.3 6.2 12.1 C5 13.8 3.4 14.8 1.4 15.2 C2.6 14 3.2 12.6 3.2 11 C1.4 9.8 0.6 8.4 0.6 6.6 C0.6 3.4 3.8 0.7 8.8 0.7Z" fill="#d4d7fb" stroke="#7c84e4" stroke-width="1"/><circle cx="5.4" cy="6.8" r="1.1" fill="#1c2058"/><circle cx="8.8" cy="6.8" r="1.1" fill="#1c2058"/><circle cx="12.2" cy="6.8" r="1.1" fill="#1c2058"/></svg>
<svg style="left:587px;top:115.2px" width="17" height="17" viewBox="0 0 17 17" ><g transform="translate(3.4,0)"><path d="M0 3.6 L3.4 0 H13.4 V7.2 H3.4Z" fill="#6a2cc2"/><path d="M3.4 0 H13.4 V1.4 H3.4Z" fill="#8a50dc"/><rect x="-3" y="3.1" width="4" height="1.1" fill="#241050"/><rect x="6.4" y="2" width="2.2" height="3.4" fill="none" stroke="#f0e8ff" stroke-width="0.9"/><rect x="10.4" y="1.6" width="1" height="4.2" fill="#f0e8ff"/></g><g transform="translate(3.4,9.4)"><path d="M0 3.6 L3.4 0 H13.4 V7.2 H3.4Z" fill="#6a2cc2"/><path d="M3.4 0 H13.4 V1.4 H3.4Z" fill="#8a50dc"/><rect x="-3" y="3.1" width="4" height="1.1" fill="#241050"/><rect x="5.8" y="2" width="6" height="1" fill="#f0e8ff"/><rect x="5.8" y="4.2" width="6" height="1" fill="#f0e8ff"/></g></svg>
<svg style="left:609.6px;top:118.7px" width="8.4" height="11.5" viewBox="0 0 8.4 11.5" ><path d="M2.7 0 H5.7 V3.8 H8.4 L4.2 7.8 L0 3.8 H2.7Z" fill="#0c0c10"/><rect x="0" y="9.6" width="8.4" height="1.8" fill="#0c0c10"/></svg>
<svg style="left:626.6px;top:115.2px" width="18" height="17" viewBox="0 0 18 17" ><g transform="translate(3.6,8.8)"><path d="M0 3.9 L3.4 0 H13.6 V7.8 H3.4Z" fill="#3c3c3c"/><path d="M3.4 0 H13.6 V1.4 H3.4Z" fill="#5a5a5a"/><rect x="-3" y="3.4" width="4" height="1.1" fill="#2a2a2a"/></g><path d="M10.4 0.5 C14.4 0.5 16.6 2.2 16.6 4.4 C16.6 6.8 14.2 8.4 10.4 8.4 C9.6 8.4 9 8.3 8.4 8.2 C7.6 9.4 6.6 10 5.2 10.4 C6 9.6 6.4 8.6 6.4 7.6 C5 6.8 4.4 5.6 4.4 4.4 C4.4 2.2 6.6 0.5 10.4 0.5Z" fill="#f4f4f4" stroke="#9c9c9c" stroke-width="0.9"/><circle cx="7.8" cy="4.4" r="0.9" fill="#222"/><circle cx="10.5" cy="4.4" r="0.9" fill="#222"/><circle cx="13.2" cy="4.4" r="0.9" fill="#222"/></svg>
<svg style="left:649.2px;top:118.7px" width="8.4" height="11.5" viewBox="0 0 8.4 11.5" ><path d="M2.7 0 H5.7 V3.8 H8.4 L4.2 7.8 L0 3.8 H2.7Z" fill="#0c0c10"/><rect x="0" y="9.6" width="8.4" height="1.8" fill="#0c0c10"/></svg>
<svg style="left:666.4px;top:116px" width="16" height="6.6" viewBox="0 0 16 6.6" ><g transform="scale(0.89,0.79)"><rect x="0" y="0" width="2.5" height="8.4" fill="#2a52e8"/><rect x="15.5" y="0" width="2.5" height="8.4" fill="#2a52e8"/><path d="M8 0.5 L3.2 4.2 L8 7.9 M10 0.5 L14.8 4.2 L10 7.9" fill="none" stroke="#2a52e8" stroke-width="2.1"/><rect x="2" y="3.2" width="2.4" height="2" fill="#2a52e8"/><rect x="13.6" y="3.2" width="2.4" height="2" fill="#2a52e8"/></g></svg>
<svg style="left:667.4px;top:125px" width="17" height="7" viewBox="0 0 17 7" ><g transform="translate(3,0)"><path d="M0 3.4 L3.4 0 H13.6 V6.8 H3.4Z" fill="#6a2cc2"/><path d="M3.4 0 H13.6 V1.4 H3.4Z" fill="#8a50dc"/><rect x="-3" y="2.9" width="4" height="1.1" fill="#241050"/><rect x="5.8" y="1.8" width="6" height="1" fill="#f0e8ff"/><rect x="5.8" y="4" width="6" height="1" fill="#f0e8ff"/></g></svg>
<svg style="left:689.4px;top:118.7px" width="8.4" height="11.5" viewBox="0 0 8.4 11.5" ><path d="M2.7 0 H5.7 V3.8 H8.4 L4.2 7.8 L0 3.8 H2.7Z" fill="#0c0c10"/><rect x="0" y="9.6" width="8.4" height="1.8" fill="#0c0c10"/></svg>
<div style="left:704.3px;top:111.4px;width:24.8px;height:25px;background:#f6f9ff;border:1.4px solid #5c8cde;border-radius:2.5px"></div>
<svg style="left:708.5px;top:116px" width="16.5" height="15.5" viewBox="0 0 16.5 15.5" ><rect x="0" y="0" width="16.4" height="15.4" fill="#eceefb" stroke="#c6caf0" stroke-width="0.8"/><rect x="2.2" y="3" width="1.8" height="1.8" fill="#1c2058"/><rect x="5.4" y="3.4" width="9" height="1.4" fill="#1c2058"/><rect x="2.4" y="9.8" width="12" height="1.2" fill="#1c2058"/><rect x="2.4" y="7.8" width="1.2" height="5" fill="#1c2058"/><rect x="0.6" y="12.8" width="15.2" height="2" fill="#cfd3f4"/></svg>
<div style="left:732px;top:111.4px;width:24.8px;height:25px;background:#f6f9ff;border:1.4px solid #5c8cde;border-radius:2.5px"></div>
<svg style="left:735.4px;top:115.4px" width="19" height="16" viewBox="0 0 19 16" ><rect x="0.5" y="0.5" width="3.6" height="3.2" fill="#eef2ff" stroke="#3a66d4" stroke-width="1"/><rect x="0.5" y="5.7" width="3.6" height="3.2" fill="#eef2ff" stroke="#3a66d4" stroke-width="1"/><rect x="0.5" y="10.9" width="3.6" height="3.2" fill="#eef2ff" stroke="#3a66d4" stroke-width="1"/><path d="M12 0.3 L13.9 4.2 L18.2 4.7 L15 7.6 L15.9 11.8 L12 9.7 L8.1 11.8 L9 7.6 L5.8 4.7 L10.1 4.2Z" fill="#f6d23a" stroke="#c89a14" stroke-width="0.7"/><path d="M14.6 9.4 V12.6 H8 M10.2 10.4 L7.6 12.6 L10.2 14.8" fill="none" stroke="#1c2058" stroke-width="1.5"/></svg>
<div style="left:760.7px;top:110px;width:1px;height:27px;background:repeating-linear-gradient(#b4b4b4 0 1px,#e2e2e2 1px 3px)"></div>
<svg style="left:767.4px;top:114.4px" width="20" height="17" viewBox="0 0 20 17" ><path d="M6.2 0.8 L11 5 L6.8 7.2 L7 5.6 C4.8 7.2 4.6 11.6 8.4 14.4 L7.4 16.6 C1.4 14 0.2 7.6 4.6 3.6Z" fill="#1a2058"/><circle cx="14.6" cy="5" r="4.8" fill="#e02828"/><circle cx="14.6" cy="5" r="4.8" fill="none" stroke="#f8b0b0" stroke-width="0.7"/><path d="M12.6 3 L16.6 7 M16.6 3 L12.6 7" stroke="#ffffff" stroke-width="1.5"/></svg>
<svg style="left:794px;top:116px" width="8" height="16" viewBox="0 0 8 16" ><path d="M6 2.6 C2.6 4.4 1.6 9 4.4 12 C5.6 13.2 7 13.6 8 13.6" fill="none" stroke="#1a2058" stroke-width="2.6"/></svg>
<div style="left:321.5px;top:139px;width:478.5px;height:25px;background:#d0d0d0;"></div>
<span class="t" style="top:143.00px;font-size:15px;line-height:15px;color:#1c1a22;left:351.00px;-webkit-text-stroke:0.5px #1c1a22;letter-spacing:0.828px;">Main</span>
<div style="left:321.5px;top:164px;width:478.5px;height:21px;background:linear-gradient(#e4e4e4,#d2d2d3 55%,#cfcfd0);border-top:1px solid #f0f0f0;border-bottom:1px solid #b9b9bb"></div>
<div style="left:349px;top:164px;width:1px;height:21px;background:#ededed;"></div>
<div style="left:350px;top:165px;width:1px;height:20px;background:#c0c0c2;"></div>
<div style="left:371px;top:164px;width:1px;height:21px;background:#ededed;"></div>
<div style="left:372px;top:165px;width:1px;height:20px;background:#c0c0c2;"></div>
<div style="left:588.5px;top:164px;width:1px;height:21px;background:#ededed;"></div>
<div style="left:589.5px;top:165px;width:1px;height:20px;background:#c0c0c2;"></div>
<div style="left:725px;top:164px;width:1px;height:21px;background:#ededed;"></div>
<div style="left:726px;top:165px;width:1px;height:20px;background:#c0c0c2;"></div>
<div style="left:372px;top:165px;width:216.5px;height:19px;background:linear-gradient(#e9edf4,#d6dce8)"></div>
<span class="t" style="top:168.00px;font-size:13px;line-height:13px;color:#2b2430;left:375.75px;letter-spacing:-0.129px;">Name</span>
<span class="t" style="top:168.00px;font-size:13px;line-height:13px;color:#2b2430;left:592.50px;letter-spacing:0.279px;">Datentyp</span>
<span class="t" style="top:168.00px;font-size:13px;line-height:13px;color:#2b2430;left:730.00px;letter-spacing:0.325px;">Defaultwert</span>
<div style="left:321.5px;top:185px;width:478.5px;height:13px;background:#e8e8e8;"></div>
<div style="left:321.5px;top:185px;width:27.5px;height:13px;background:#c4cddb;"></div>
<div style="left:371.5px;top:185px;width:217px;height:13px;background:#e2e4e8;"></div>
<div style="left:349px;top:185px;width:1px;height:13px;background:#f4f4f4;"></div>
<div style="left:371px;top:185px;width:1px;height:13px;background:#f4f4f4;"></div>
<div style="left:588.5px;top:185px;width:1px;height:13px;background:#f4f4f4;"></div>
<div style="left:725px;top:185px;width:1px;height:13px;background:#f4f4f4;"></div>
<div style="left:321.5px;top:185px;width:478.5px;height:12.5px;overflow:hidden">
<span class="t" style="top:5.87px;font-size:11.5px;line-height:11.5px;color:#958a72;left:6.10px;">1</span>
<span class="t" style="top:5.50px;font-size:13px;line-height:13px;color:#2b2430;left:76.50px;letter-spacing:0.770px;">Input</span>
<svg style="left:55.5px;top:7px" width="10" height="6" viewBox="0 0 10 6"><path d="M0.5 0.5 L9.5 0.5 L5 5.5Z" fill="#15151a"/></svg>
<svg style="left:29.5px;top:6.6px" width="17.5" height="12" viewBox="0 0 17.5 12" ><path d="M0 6.5 L6 0.5 H17 V12 H0Z" fill="#2c8cf0"/><path d="M6 0.5 H17 V2 H4.6Z" fill="#7cc0ff"/><rect x="9" y="3.4" width="1.3" height="6" fill="#eaf4ff"/><rect x="11.6" y="3.4" width="3.4" height="6" fill="none" stroke="#eaf4ff" stroke-width="1.1"/><path d="M0 6.5 L3 6.5" stroke="#1a2a6a" stroke-width="1"/></svg>
</div>
<div style="left:321.5px;top:197px;width:478.5px;height:1px;background:#88888a;"></div>
<div style="left:321.5px;top:198.5px;width:478.5px;height:7.5px;background:#dcdcdd;"></div>
<div style="left:321.5px;top:204.8px;width:478.5px;height:1px;background:#bdbdbd;"></div>
<div style="left:321.5px;top:206px;width:478.5px;height:43.6px;background:#eeeeee;"></div>
<div style="left:321.5px;top:245px;width:478.5px;height:4.6px;background:#e8e8e8;"></div>
<div style="left:323.5px;top:208.5px;width:36.5px;height:36.5px;background:#ffffff;"></div>
<div style="left:362.15px;top:208.5px;width:36.5px;height:36.5px;background:#ffffff;"></div>
<div style="left:400.8px;top:208.5px;width:36.5px;height:36.5px;background:#ffffff;"></div>
<div style="left:439.45px;top:208.5px;width:36.5px;height:36.5px;background:#ffffff;"></div>
<div style="left:478.1px;top:208.5px;width:36.5px;height:36.5px;background:#ffffff;"></div>
<div style="left:516.75px;top:208.5px;width:36.5px;height:36.5px;background:#ffffff;"></div>
<div style="left:555.4px;top:208.5px;width:36.5px;height:36.5px;background:#ffffff;"></div>
<span class="t" style="left:337.8px;top:222.6px;font-size:9.6px;line-height:10px;font-weight:bold;color:#22264e">&amp;</span>
<span class="t" style="left:369.55px;top:222.6px;font-size:9.4px;line-height:10px;font-weight:bold;color:#22264e;letter-spacing:2.9px">&gt;=1</span>
<svg style="left:409px;top:219px" width="21" height="16.5" viewBox="0 0 21 16.5" ><rect x="2.8" y="0.7" width="15.4" height="15" fill="#ffffff" stroke="#22264e" stroke-width="1.3"/><rect x="0" y="3" width="3" height="1.4" fill="#22264e"/><rect x="18" y="3" width="3" height="1.4" fill="#22264e"/><text x="5.6" y="11.6" font-family="Liberation Sans, sans-serif" font-size="9.4" fill="#3a3e62" textLength="10" lengthAdjust="spacingAndGlyphs">??</text></svg>
<svg style="left:453.45px;top:222.3px" width="11" height="9.2" viewBox="0 0 11 9.2" ><rect x="0" y="3.5" width="9.4" height="2.1" fill="#22264e"/><rect x="9" y="0" width="2" height="9.2" fill="#22264e"/></svg>
<svg style="left:485.9px;top:222.6px" width="20" height="9.4" viewBox="0 0 20 9.4" ><rect x="0" y="3.5" width="7.6" height="1.9" fill="#22264e"/><ellipse cx="12.6" cy="4.7" rx="2.5" ry="2.9" fill="none" stroke="#22264e" stroke-width="1.4"/><rect x="18" y="0" width="1.9" height="9" fill="#22264e"/></svg>
<svg style="left:524.15px;top:222.8px" width="19" height="9.4" viewBox="0 0 19 9.4" ><rect x="0" y="0" width="1.8" height="5.6" fill="#22264e"/><rect x="0" y="3.8" width="15" height="1.9" fill="#22264e"/><path d="M12.6 0.2 L18.6 4.7 L12.6 9.2Z" fill="#22264e"/></svg>
<svg style="left:563.8px;top:220.8px" width="23" height="13.4" viewBox="0 0 23 13.4" ><rect x="0" y="5.7" width="7" height="1.9" fill="#22264e"/><path d="M10.6 0.8 H7.6 V12.6 H10.6 M18.6 0.8 H21.6 V12.6 H18.6" fill="none" stroke="#22264e" stroke-width="1.7"/><rect x="12.4" y="4.9" width="4" height="1.2" fill="#22264e"/><rect x="12.4" y="7.3" width="4" height="1.2" fill="#22264e"/></svg>
<div style="left:321.5px;top:249.6px;width:478.5px;height:533px;background:#ffffff;"></div>
<div style="left:440px;top:248.5px;width:80px;height:6px;overflow:hidden"><span class="t" style="top:-0.56px;font-size:6.1px;line-height:6.1px;color:#55505c;left:19.00px;letter-spacing:-0.018px;">Mode_DB</span></div>
<div style="left:419px;top:260.3px;width:111px;height:498.4px;background:#dfe0ea;"></div>
<div style="left:419px;top:260.3px;width:111px;height:18.8px;background:#c8cbd9;"></div>
<span class="t" style="top:261.33px;font-size:6.7px;line-height:6.7px;color:#169a9c;left:465.00px;font-weight:bold;letter-spacing:-0.350px;">%FB3</span>
<span class="t" style="top:270.13px;font-size:6.7px;line-height:6.7px;color:#2a2630;left:445.00px;letter-spacing:0.395px;text-shadow:0.2px 0 0 #2a2630;">"Automatic Mode"</span>
<div style="left:410.6px;top:286px;width:8.6px;height:1.7px;background:#4e4e56;"></div>
<span class="t" style="top:282.98px;font-size:6.4px;line-height:6.4px;color:#1c1a22;left:421.00px;letter-spacing:-0.350px;text-shadow:0.25px 0 0 #1c1a22;">EN</span>
<span class="t" style="top:282.84px;font-size:6.1px;line-height:6.1px;color:#55505c;left:401.50px;">...</span>
<div style="left:410.6px;top:318.45px;width:8.6px;height:1.7px;background:#4e4e56;"></div>
<span class="t" style="top:306.79px;font-size:6.1px;line-height:6.1px;color:#55505c;right:391.18px;letter-spacing:0.216px;">"B1_Induktive</span>
<span class="t" style="top:313.69px;font-size:6.1px;line-height:6.1px;color:#55505c;right:391.44px;letter-spacing:-0.036px;">Sensor_K1"</span>
<span class="t" style="top:298.28px;font-size:6.7px;line-height:6.7px;color:#169a9c;right:391.18px;font-weight:bold;letter-spacing:0.223px;">%I0.0</span>
<span class="t" style="top:307.43px;font-size:6.4px;line-height:6.4px;color:#1c1a22;left:421.00px;letter-spacing:-0.185px;text-shadow:0.25px 0 0 #1c1a22;">sensor1_</span>
<span class="t" style="top:314.23px;font-size:6.4px;line-height:6.4px;color:#1c1a22;left:421.00px;letter-spacing:0.283px;text-shadow:0.25px 0 0 #1c1a22;">induktive</span>
<div style="left:410.6px;top:351.7px;width:8.6px;height:1.7px;background:#4e4e56;"></div>
<span class="t" style="top:340.04px;font-size:6.1px;line-height:6.1px;color:#55505c;right:391.33px;letter-spacing:0.071px;">"B2_OpticSensor_</span>
<span class="t" style="top:346.94px;font-size:6.1px;line-height:6.1px;color:#55505c;right:391.46px;letter-spacing:-0.062px;">K1"</span>
<span class="t" style="top:331.53px;font-size:6.7px;line-height:6.7px;color:#169a9c;right:391.18px;font-weight:bold;letter-spacing:0.223px;">%I0.1</span>
<span class="t" style="top:348.78px;font-size:6.4px;line-height:6.4px;color:#1c1a22;left:421.00px;letter-spacing:0.042px;text-shadow:0.25px 0 0 #1c1a22;">sensor2</span>
<div style="left:410.6px;top:383.2px;width:8.6px;height:1.7px;background:#4e4e56;"></div>
<span class="t" style="top:371.54px;font-size:6.1px;line-height:6.1px;color:#55505c;right:391.31px;letter-spacing:0.095px;">"B3_opticSensor_</span>
<span class="t" style="top:378.44px;font-size:6.1px;line-height:6.1px;color:#55505c;right:391.45px;letter-spacing:-0.055px;">k2"</span>
<span class="t" style="top:363.03px;font-size:6.7px;line-height:6.7px;color:#169a9c;right:391.18px;font-weight:bold;letter-spacing:0.223px;">%I0.2</span>
<span class="t" style="top:380.28px;font-size:6.4px;line-height:6.4px;color:#1c1a22;left:421.00px;letter-spacing:0.042px;text-shadow:0.25px 0 0 #1c1a22;">sensor3</span>
<div style="left:410.6px;top:416.3px;width:8.6px;height:1.7px;background:#4e4e56;"></div>
<span class="t" style="top:404.64px;font-size:6.1px;line-height:6.1px;color:#55505c;right:391.31px;letter-spacing:0.095px;">"B4_opticSensor_</span>
<span class="t" style="top:411.54px;font-size:6.1px;line-height:6.1px;color:#55505c;right:391.45px;letter-spacing:-0.055px;">k2"</span>
<span class="t" style="top:396.13px;font-size:6.7px;line-height:6.7px;color:#169a9c;right:391.18px;font-weight:bold;letter-spacing:0.223px;">%I0.3</span>
<span class="t" style="top:413.38px;font-size:6.4px;line-height:6.4px;color:#1c1a22;left:421.00px;letter-spacing:0.042px;text-shadow:0.25px 0 0 #1c1a22;">sensor4</span>
<div style="left:410.6px;top:448.5px;width:8.6px;height:1.7px;background:#4e4e56;"></div>
<span class="t" style="top:436.84px;font-size:6.1px;line-height:6.1px;color:#55505c;right:391.31px;letter-spacing:0.095px;">"B5_opticSensor_</span>
<span class="t" style="top:443.74px;font-size:6.1px;line-height:6.1px;color:#55505c;right:391.46px;letter-spacing:-0.062px;">K1"</span>
<span class="t" style="top:428.33px;font-size:6.7px;line-height:6.7px;color:#169a9c;right:391.18px;font-weight:bold;letter-spacing:0.223px;">%I0.4</span>
<span class="t" style="top:445.58px;font-size:6.4px;line-height:6.4px;color:#1c1a22;left:421.00px;letter-spacing:0.042px;text-shadow:0.25px 0 0 #1c1a22;">sensor5</span>
<div style="left:410.6px;top:481.4px;width:8.6px;height:1.7px;background:#4e4e56;"></div>
<span class="t" style="top:469.74px;font-size:6.1px;line-height:6.1px;color:#55505c;right:391.31px;letter-spacing:0.095px;">"B6_opticSensor_</span>
<span class="t" style="top:476.64px;font-size:6.1px;line-height:6.1px;color:#55505c;right:391.45px;letter-spacing:-0.055px;">k1"</span>
<span class="t" style="top:461.23px;font-size:6.7px;line-height:6.7px;color:#169a9c;right:391.18px;font-weight:bold;letter-spacing:0.223px;">%I0.5</span>
<span class="t" style="top:478.48px;font-size:6.4px;line-height:6.4px;color:#1c1a22;left:421.00px;letter-spacing:0.042px;text-shadow:0.25px 0 0 #1c1a22;">sensor6</span>
<div style="left:410.6px;top:513.3px;width:8.6px;height:1.7px;background:#4e4e56;"></div>
<span class="t" style="top:501.64px;font-size:6.1px;line-height:6.1px;color:#55505c;right:391.61px;letter-spacing:-0.206px;">"RB_out1_Rb</span>
<span class="t" style="top:508.54px;font-size:6.1px;line-height:6.1px;color:#55505c;right:390.91px;letter-spacing:0.493px;">Initialized"</span>
<span class="t" style="top:493.13px;font-size:6.7px;line-height:6.7px;color:#169a9c;right:391.18px;font-weight:bold;letter-spacing:0.223px;">%I0.6</span>
<span class="t" style="top:502.28px;font-size:6.4px;line-height:6.4px;color:#1c1a22;left:421.00px;letter-spacing:-0.016px;text-shadow:0.25px 0 0 #1c1a22;">Robot</span>
<span class="t" style="top:509.08px;font-size:6.4px;line-height:6.4px;color:#1c1a22;left:421.00px;letter-spacing:0.430px;text-shadow:0.25px 0 0 #1c1a22;">Initialisation</span>
<div style="left:410.6px;top:546.2px;width:8.6px;height:1.7px;background:#4e4e56;"></div>
<span class="t" style="top:534.54px;font-size:6.1px;line-height:6.1px;color:#55505c;right:391.49px;letter-spacing:-0.088px;">"RB_out3_Start_</span>
<span class="t" style="top:541.44px;font-size:6.1px;line-height:6.1px;color:#55505c;right:390.95px;letter-spacing:0.445px;">k1"</span>
<span class="t" style="top:526.03px;font-size:6.7px;line-height:6.7px;color:#169a9c;right:391.18px;font-weight:bold;letter-spacing:0.223px;">%I0.7</span>
<span class="t" style="top:535.18px;font-size:6.4px;line-height:6.4px;color:#1c1a22;left:421.00px;letter-spacing:0.029px;text-shadow:0.25px 0 0 #1c1a22;">Start Conveyor</span>
<span class="t" style="top:541.98px;font-size:6.4px;line-height:6.4px;color:#1c1a22;left:421.00px;letter-spacing:-0.350px;text-shadow:0.25px 0 0 #1c1a22;">1</span>
<div style="left:410.6px;top:578.4px;width:8.6px;height:1.7px;background:#4e4e56;"></div>
<span class="t" style="top:566.74px;font-size:6.1px;line-height:6.1px;color:#55505c;right:391.44px;letter-spacing:-0.037px;">"RB_out5_start_</span>
<span class="t" style="top:573.64px;font-size:6.1px;line-height:6.1px;color:#55505c;right:390.95px;letter-spacing:0.445px;">k2"</span>
<span class="t" style="top:558.23px;font-size:6.7px;line-height:6.7px;color:#169a9c;right:391.18px;font-weight:bold;letter-spacing:0.223px;">%I1.1</span>
<span class="t" style="top:567.38px;font-size:6.4px;line-height:6.4px;color:#1c1a22;left:421.00px;letter-spacing:0.029px;text-shadow:0.25px 0 0 #1c1a22;">Start Conveyor</span>
<span class="t" style="top:574.18px;font-size:6.4px;line-height:6.4px;color:#1c1a22;left:421.00px;letter-spacing:-0.163px;text-shadow:0.25px 0 0 #1c1a22;">2</span>
<div style="left:410.6px;top:611.45px;width:8.6px;height:1.7px;background:#4e4e56;"></div>
<span class="t" style="top:599.79px;font-size:6.1px;line-height:6.1px;color:#55505c;right:391.44px;letter-spacing:-0.037px;">"RB_out4_start_</span>
<span class="t" style="top:606.69px;font-size:6.1px;line-height:6.1px;color:#55505c;right:390.95px;letter-spacing:0.445px;">k3"</span>
<span class="t" style="top:591.28px;font-size:6.7px;line-height:6.7px;color:#169a9c;right:391.18px;font-weight:bold;letter-spacing:0.223px;">%I1.0</span>
<span class="t" style="top:600.43px;font-size:6.4px;line-height:6.4px;color:#1c1a22;left:421.00px;letter-spacing:0.143px;text-shadow:0.25px 0 0 #1c1a22;">start conveyor</span>
<span class="t" style="top:607.23px;font-size:6.4px;line-height:6.4px;color:#1c1a22;left:421.00px;letter-spacing:-0.163px;text-shadow:0.25px 0 0 #1c1a22;">3</span>
<div style="left:410.6px;top:643.7px;width:8.6px;height:1.7px;background:#4e4e56;"></div>
<span class="t" style="top:632.04px;font-size:6.1px;line-height:6.1px;color:#55505c;right:391.35px;letter-spacing:0.054px;">"RB_out2_NotAus</span>
<span class="t" style="top:638.94px;font-size:6.1px;line-height:6.1px;color:#55505c;right:391.54px;letter-spacing:-0.143px;">FromRB"</span>
<span class="t" style="top:623.53px;font-size:6.7px;line-height:6.7px;color:#169a9c;right:391.18px;font-weight:bold;letter-spacing:0.223px;">%I1.2</span>
<span class="t" style="top:640.78px;font-size:6.4px;line-height:6.4px;color:#1c1a22;left:421.00px;letter-spacing:0.268px;text-shadow:0.25px 0 0 #1c1a22;">Not Aus</span>
<div style="left:410.6px;top:665px;width:8.6px;height:1.7px;background:#4e4e56;"></div>
<span class="t" style="top:661.04px;font-size:6.1px;line-height:6.1px;color:#55505c;right:391.06px;letter-spacing:0.344px;">"HMI_Main_start"</span>
<span class="t" style="top:653.33px;font-size:6.7px;line-height:6.7px;color:#169a9c;right:391.48px;font-weight:bold;letter-spacing:-0.082px;">%M0.0</span>
<span class="t" style="top:662.08px;font-size:6.4px;line-height:6.4px;color:#1c1a22;left:421.00px;letter-spacing:0.141px;text-shadow:0.25px 0 0 #1c1a22;">start</span>
<div style="left:410.6px;top:686.7px;width:8.6px;height:1.7px;background:#4e4e56;"></div>
<span class="t" style="top:682.74px;font-size:6.1px;line-height:6.1px;color:#55505c;right:391.15px;letter-spacing:0.249px;">"HMI_Main_stop"</span>
<span class="t" style="top:675.03px;font-size:6.7px;line-height:6.7px;color:#169a9c;right:391.48px;font-weight:bold;letter-spacing:-0.082px;">%M0.1</span>
<span class="t" style="top:683.78px;font-size:6.4px;line-height:6.4px;color:#1c1a22;left:421.00px;letter-spacing:-0.031px;text-shadow:0.25px 0 0 #1c1a22;">stop</span>
<div style="left:410.6px;top:719.9px;width:8.6px;height:1.7px;background:#4e4e56;"></div>
<span class="t" style="top:708.24px;font-size:6.1px;line-height:6.1px;color:#55505c;right:391.06px;letter-spacing:0.342px;">"HMI_Automatic_</span>
<span class="t" style="top:715.14px;font-size:6.1px;line-height:6.1px;color:#55505c;right:391.26px;letter-spacing:0.145px;">mode"</span>
<span class="t" style="top:699.73px;font-size:6.7px;line-height:6.7px;color:#169a9c;right:391.48px;font-weight:bold;letter-spacing:-0.082px;">%M0.2</span>
<span class="t" style="top:708.88px;font-size:6.4px;line-height:6.4px;color:#1c1a22;left:421.00px;letter-spacing:0.322px;text-shadow:0.25px 0 0 #1c1a22;">Automatic</span>
<span class="t" style="top:715.68px;font-size:6.4px;line-height:6.4px;color:#1c1a22;left:421.00px;text-shadow:0.25px 0 0 #1c1a22;">mode</span>
<div style="left:410.6px;top:752.1px;width:8.6px;height:1.7px;background:#4e4e56;"></div>
<span class="t" style="top:740.44px;font-size:6.1px;line-height:6.1px;color:#55505c;right:391.14px;letter-spacing:0.263px;">"HMI_manual_</span>
<span class="t" style="top:747.34px;font-size:6.1px;line-height:6.1px;color:#55505c;right:391.24px;letter-spacing:0.162px;">mode_Conveyor"</span>
<span class="t" style="top:731.93px;font-size:6.7px;line-height:6.7px;color:#169a9c;right:391.48px;font-weight:bold;letter-spacing:-0.082px;">%M0.4</span>
<span class="t" style="top:749.18px;font-size:6.4px;line-height:6.4px;color:#1c1a22;left:421.00px;letter-spacing:0.127px;text-shadow:0.25px 0 0 #1c1a22;">Manual mode</span>
<div style="left:530px;top:503.1px;width:8.6px;height:1.7px;background:#4e4e56;"></div>
<span class="t" style="top:490.74px;font-size:6.1px;line-height:6.1px;color:#55505c;left:539.40px;letter-spacing:0.137px;">"Conveyor1_</span>
<span class="t" style="top:497.24px;font-size:6.1px;line-height:6.1px;color:#55505c;left:539.40px;letter-spacing:0.401px;">automatik"</span>
<span class="t" style="top:481.93px;font-size:6.7px;line-height:6.7px;color:#169a9c;left:539.40px;font-weight:bold;letter-spacing:0.193px;">%M2.6</span>
<span class="t" style="top:500.18px;font-size:6.4px;line-height:6.4px;color:#1c1a22;right:272.47px;letter-spacing:0.035px;text-shadow:0.25px 0 0 #1c1a22;">Conveyor 1</span>
<div style="left:530px;top:534.7px;width:8.6px;height:1.7px;background:#4e4e56;"></div>
<span class="t" style="top:522.34px;font-size:6.1px;line-height:6.1px;color:#55505c;left:539.40px;letter-spacing:0.137px;">"Conveyor2_</span>
<span class="t" style="top:528.84px;font-size:6.1px;line-height:6.1px;color:#55505c;left:539.40px;letter-spacing:0.401px;">automatik"</span>
<span class="t" style="top:513.53px;font-size:6.7px;line-height:6.7px;color:#169a9c;left:539.40px;font-weight:bold;letter-spacing:0.193px;">%M2.7</span>
<span class="t" style="top:531.78px;font-size:6.4px;line-height:6.4px;color:#1c1a22;right:272.47px;letter-spacing:0.035px;text-shadow:0.25px 0 0 #1c1a22;">Conveyor 2</span>
<div style="left:530px;top:568.05px;width:8.6px;height:1.7px;background:#4e4e56;"></div>
<span class="t" style="top:555.69px;font-size:6.1px;line-height:6.1px;color:#55505c;left:539.40px;letter-spacing:0.137px;">"Conveyor3_</span>
<span class="t" style="top:562.19px;font-size:6.1px;line-height:6.1px;color:#55505c;left:539.40px;letter-spacing:0.401px;">automatik"</span>
<span class="t" style="top:546.88px;font-size:6.7px;line-height:6.7px;color:#169a9c;left:539.40px;font-weight:bold;letter-spacing:0.193px;">%M3.0</span>
<span class="t" style="top:565.13px;font-size:6.4px;line-height:6.4px;color:#1c1a22;right:272.47px;letter-spacing:0.035px;text-shadow:0.25px 0 0 #1c1a22;">Conveyor 3</span>
<div style="left:530px;top:599.9px;width:8.6px;height:1.7px;background:#4e4e56;"></div>
<span class="t" style="top:587.54px;font-size:6.1px;line-height:6.1px;color:#55505c;left:539.40px;letter-spacing:0.231px;">"Put_pallets_k2_</span>
<span class="t" style="top:594.04px;font-size:6.1px;line-height:6.1px;color:#55505c;left:539.40px;letter-spacing:0.378px;">automatic"</span>
<span class="t" style="top:578.73px;font-size:6.7px;line-height:6.7px;color:#169a9c;left:539.40px;font-weight:bold;letter-spacing:0.193px;">%M3.3</span>
<span class="t" style="top:596.98px;font-size:6.4px;line-height:6.4px;color:#1c1a22;right:272.36px;letter-spacing:0.138px;text-shadow:0.25px 0 0 #1c1a22;">put Pallet 1</span>
<div style="left:530px;top:633.2px;width:8.6px;height:1.7px;background:#4e4e56;"></div>
<span class="t" style="top:620.84px;font-size:6.1px;line-height:6.1px;color:#55505c;left:539.40px;letter-spacing:0.231px;">"Put_pallets_k3_</span>
<span class="t" style="top:627.34px;font-size:6.1px;line-height:6.1px;color:#55505c;left:539.40px;letter-spacing:0.378px;">automatic"</span>
<span class="t" style="top:612.03px;font-size:6.7px;line-height:6.7px;color:#169a9c;left:539.40px;font-weight:bold;letter-spacing:0.193px;">%M3.4</span>
<span class="t" style="top:630.28px;font-size:6.4px;line-height:6.4px;color:#1c1a22;right:272.30px;letter-spacing:0.202px;text-shadow:0.25px 0 0 #1c1a22;">put pallet 2</span>
<div style="left:530px;top:663.95px;width:8.6px;height:1.7px;background:#4e4e56;"></div>
<span class="t" style="top:651.59px;font-size:6.1px;line-height:6.1px;color:#55505c;left:539.40px;letter-spacing:0.224px;">"Pick_place_k2_</span>
<span class="t" style="top:658.09px;font-size:6.1px;line-height:6.1px;color:#55505c;left:539.40px;letter-spacing:0.378px;">automatic"</span>
<span class="t" style="top:642.78px;font-size:6.7px;line-height:6.7px;color:#169a9c;left:539.40px;font-weight:bold;letter-spacing:0.193px;">%M3.7</span>
<span class="t" style="top:654.63px;font-size:6.4px;line-height:6.4px;color:#1c1a22;right:272.33px;letter-spacing:0.166px;text-shadow:0.25px 0 0 #1c1a22;">Pick n Place</span>
<span class="t" style="top:661.63px;font-size:6.4px;line-height:6.4px;color:#1c1a22;right:272.47px;letter-spacing:0.027px;text-shadow:0.25px 0 0 #1c1a22;">Object 1</span>
<div style="left:530px;top:697.2px;width:8.6px;height:1.7px;background:#4e4e56;"></div>
<span class="t" style="top:684.84px;font-size:6.1px;line-height:6.1px;color:#55505c;left:539.40px;letter-spacing:0.224px;">"Pick_place_k3_</span>
<span class="t" style="top:691.34px;font-size:6.1px;line-height:6.1px;color:#55505c;left:539.40px;letter-spacing:0.378px;">automatic"</span>
<span class="t" style="top:676.03px;font-size:6.7px;line-height:6.7px;color:#169a9c;left:539.40px;font-weight:bold;letter-spacing:0.193px;">%M4.0</span>
<span class="t" style="top:687.88px;font-size:6.4px;line-height:6.4px;color:#1c1a22;right:272.27px;letter-spacing:0.230px;text-shadow:0.25px 0 0 #1c1a22;">Pick n place</span>
<span class="t" style="top:694.88px;font-size:6.4px;line-height:6.4px;color:#1c1a22;right:272.27px;letter-spacing:0.230px;text-shadow:0.25px 0 0 #1c1a22;">object 2</span>
<div style="left:530px;top:740.9px;width:8.6px;height:1.7px;background:#4e4e56;"></div>
<span class="t" style="top:721.24px;font-size:6.1px;line-height:6.1px;color:#55505c;left:539.40px;letter-spacing:-0.055px;">"Robot_</span>
<span class="t" style="top:728.14px;font-size:6.1px;line-height:6.1px;color:#55505c;left:539.40px;letter-spacing:0.516px;">initializing_</span>
<span class="t" style="top:735.04px;font-size:6.1px;line-height:6.1px;color:#55505c;left:539.40px;letter-spacing:0.600px;">query"</span>
<span class="t" style="top:712.43px;font-size:6.7px;line-height:6.7px;color:#169a9c;left:539.40px;font-weight:bold;letter-spacing:0.287px;">%Q0.3</span>
<span class="t" style="top:731.58px;font-size:6.4px;line-height:6.4px;color:#1c1a22;right:272.47px;letter-spacing:0.030px;text-shadow:0.25px 0 0 #1c1a22;">Request Robot</span>
<span class="t" style="top:738.58px;font-size:6.4px;line-height:6.4px;color:#1c1a22;right:272.42px;letter-spacing:0.078px;text-shadow:0.25px 0 0 #1c1a22;">Update</span>
<div style="left:530px;top:752.1px;width:8.6px;height:1.7px;background:#4e4e56;"></div>
<span class="t" style="top:749.18px;font-size:6.4px;line-height:6.4px;color:#1c1a22;right:272.85px;letter-spacing:-0.350px;text-shadow:0.25px 0 0 #1c1a22;">ENO</span>
<div style="left:421px;top:324.2px;width:30px;height:1.2px;background:linear-gradient(90deg,#f4f4f9,#e8e9f1)"></div>
<div style="left:421px;top:389.2px;width:24px;height:1.2px;background:linear-gradient(90deg,#f4f4f9,#e8e9f1)"></div>
<div style="left:421px;top:454.3px;width:26px;height:1.2px;background:linear-gradient(90deg,#f4f4f9,#e8e9f1)"></div>
<div style="left:421px;top:519.4px;width:40px;height:1.2px;background:linear-gradient(90deg,#f4f4f9,#e8e9f1)"></div>
<div style="left:421px;top:584.4px;width:44px;height:1.2px;background:linear-gradient(90deg,#f4f4f9,#e8e9f1)"></div>
<div style="left:421px;top:649.6px;width:24px;height:1.2px;background:linear-gradient(90deg,#f4f4f9,#e8e9f1)"></div>
<div style="left:421px;top:671.4px;width:14px;height:1.2px;background:linear-gradient(90deg,#f4f4f9,#e8e9f1)"></div>
<div style="left:421px;top:693.0px;width:13px;height:1.2px;background:linear-gradient(90deg,#f4f4f9,#e8e9f1)"></div>
<div style="left:494.5px;top:540.4px;width:33px;height:1.2px;background:linear-gradient(270deg,#f4f4f9,#e8e9f1)"></div>
<div style="left:503.5px;top:669.9px;width:24px;height:1.2px;background:linear-gradient(270deg,#f4f4f9,#e8e9f1)"></div>
<div style="left:321.5px;top:782.4px;width:478.5px;height:23px;background:#d8d8d8;"></div>
<svg style="left:327.2px;top:790.2px" width="12" height="6" viewBox="0 0 12 6"><path d="M0.2 0.2 L11.8 0.2 L6 5.8Z" fill="#15151a"/></svg>
<span class="t" style="top:786.10px;font-size:15px;line-height:15px;color:#1c1a22;left:366.50px;-webkit-text-stroke:0.5px #1c1a22;letter-spacing:0.830px;">Netzwerk 5:</span>
<span class="t" style="top:787.00px;font-size:13px;line-height:13px;color:#2b2430;left:468.00px;letter-spacing:0.470px;">alle Ausg&auml;nge. all the outputs</span>
<div style="left:321.5px;top:805.4px;width:478.5px;height:25.8px;background:#eaeaea;"></div>
<div style="left:321.5px;top:805.6px;width:478.5px;height:3.6px;background:#f6f6f6;"></div>
<div style="left:318px;top:831px;width:482px;height:3px;background:#1f2438;"></div>
<div style="left:321.5px;top:834px;width:478.5px;height:12px;background:#b6b6b6;"></div>
<div style="left:317.6px;top:47px;width:4px;height:799px;background:#1d2134;"></div>
</div>
</body>
</html>
